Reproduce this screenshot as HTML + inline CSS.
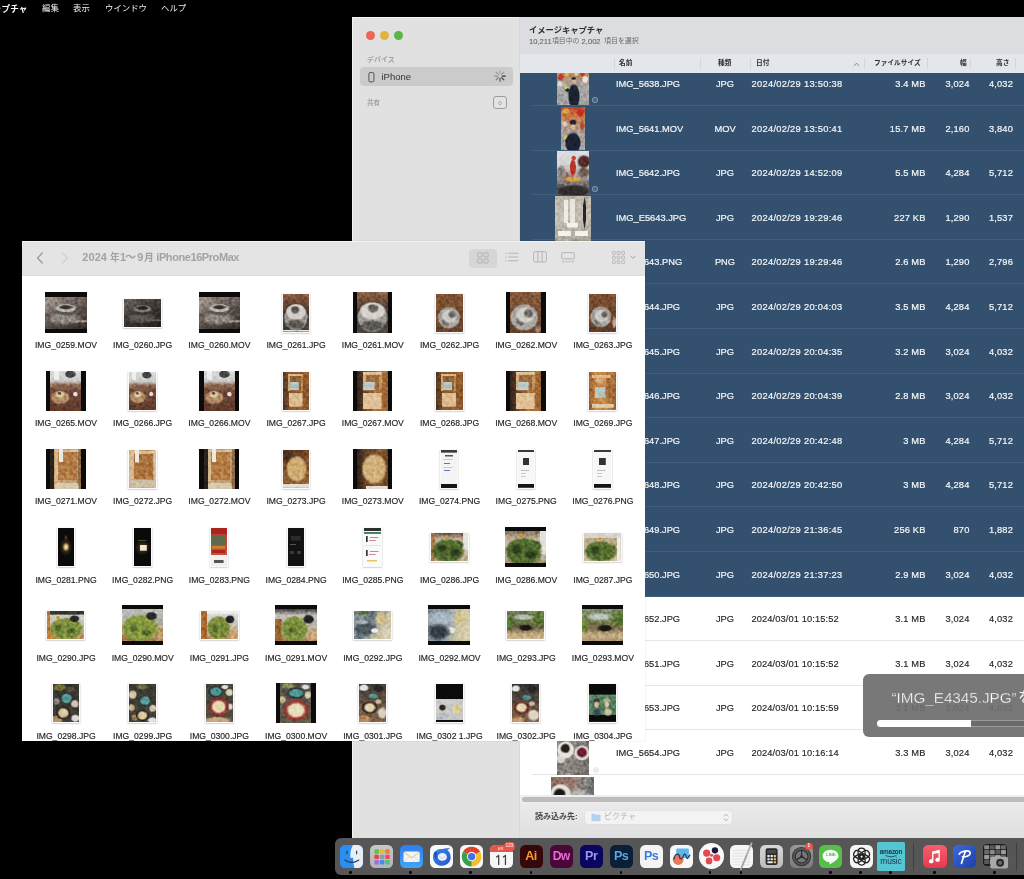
<!DOCTYPE html><html lang="ja"><head><meta charset="utf-8"><title>Image Capture</title><style>
*{box-sizing:border-box;margin:0;padding:0}
html,body{width:1024px;height:879px;overflow:hidden;background:#000}
body{position:relative;font-family:"Liberation Sans",sans-serif;color:#222;-webkit-font-smoothing:antialiased}
.abs,.jp{position:absolute}
svg{display:block;overflow:visible}
.jp text{font-family:"Liberation Sans","Noto Sans CJK JP",sans-serif;white-space:pre}
.t{position:absolute;white-space:nowrap;line-height:1}
/* ---------- Image Capture window ---------- */
#ic{position:absolute;left:352px;top:17px;width:672px;height:821px;background:#fff;overflow:hidden}
#ic .side{position:absolute;left:0;top:0;width:168px;height:821px;background:#e1e1e2;border-right:1px solid #d9d9da;box-shadow:inset 1px 1px 0 rgba(255,255,255,.6)}
#ic .head{position:absolute;left:168px;top:0;width:504px;height:37px;background:#dcdde0}
#ic .cols{position:absolute;left:168px;top:37px;width:504px;height:19px;background:#e3e6ea}
#ic .cols i{position:absolute;top:4px;width:1px;height:11px;background:#d2d5d9}
.tl{position:absolute;width:9px;height:9px;border-radius:50%}
.row{position:absolute;left:168px;width:504px;height:44.6px}
.row.sel{background:#33506e;color:#fff}
.row .ln{position:absolute;left:12px;right:0;bottom:0;height:1px;background:#e6e6e6}
.row.sel .ln{background:#415d7c}
.row .t{top:18.7px;font-size:9.3px;color:#262626;-webkit-text-stroke:.15px currentColor}
.row.sel .t{-webkit-text-stroke:.2px currentColor}
.row .d{letter-spacing:.3px}
.row .n{letter-spacing:.15px}
.row.sel .t{color:#f4f6f8}
.r{text-align:right}
/* ---------- Finder window ---------- */
#fd{position:absolute;left:22px;top:241px;width:623px;height:499.8px;background:#fff;overflow:hidden;box-shadow:0 0 0 .5px rgba(0,0,0,.07)}
#fd .bar{position:absolute;left:0;top:0;width:623px;height:35.4px;background:#e4e4e4;border-bottom:1px solid #dcdcdc;box-shadow:inset 0 1px 0 rgba(255,255,255,.55)}
.lab{position:absolute;width:90px;text-align:center;font-size:8.6px;line-height:1;color:#1f1f1f;white-space:nowrap;-webkit-text-stroke:.15px #1f1f1f}
.th{position:absolute;overflow:hidden}
.nz{position:absolute;left:0;top:0;width:100%;height:100%;filter:url(#nz);mix-blend-mode:overlay;opacity:.3}
/* ---------- Dock ---------- */
#dock{position:absolute;left:335px;top:838px;width:700px;height:37px;background:#565656;border-radius:6px 0 0 6px}
.di{position:absolute;top:7px;width:23px;height:23px;border-radius:5px;overflow:hidden}
.dot{position:absolute;top:33px;width:2.6px;height:2.6px;border-radius:50%;background:#050505}
</style></head><body>
<svg width="0" height="0" style="position:absolute"><filter id="nz" x="0" y="0" width="100%" height="100%" color-interpolation-filters="sRGB"><feTurbulence type="fractalNoise" baseFrequency=".3" numOctaves="2" seed="7"/><feColorMatrix type="matrix" values="1.7 0 0 0 -.35  1.7 0 0 0 -.35  1.7 0 0 0 -.35  0 0 0 0 1"/></filter></svg>
<div id="menubar">
<svg class="jp" style="left:-7.2px;top:3.6px;" width="34.4" height="10.0" viewBox="0 0 34.4 10.0" fill="#fff"><text x="0" y="7.6" font-size="8.6" font-weight="bold" fill="#fff">ャプチャ</text></svg>
<svg class="jp" style="left:41.5px;top:3.6px;" width="16.8" height="9.7" viewBox="0 0 16.8 9.7" fill="#f2f2f2"><text x="0" y="7.4" font-size="8.4" fill="#f2f2f2">編集</text></svg>
<svg class="jp" style="left:73px;top:3.6px;" width="16.8" height="9.7" viewBox="0 0 16.8 9.7" fill="#f2f2f2"><text x="0" y="7.4" font-size="8.4" fill="#f2f2f2">表示</text></svg>
<svg class="jp" style="left:104.5px;top:3.6px;" width="42.0" height="9.7" viewBox="0 0 42.0 9.7" fill="#f2f2f2"><text x="0" y="7.4" font-size="8.4" fill="#f2f2f2">ウインドウ</text></svg>
<svg class="jp" style="left:160.5px;top:3.6px;" width="25.2" height="9.7" viewBox="0 0 25.2 9.7" fill="#f2f2f2"><text x="0" y="7.4" font-size="8.4" fill="#f2f2f2">ヘルプ</text></svg>
</div>
<div id="ic">
<div class="side">
<div class="tl" style="left:14px;top:14px;background:#ec6559"></div>
<div class="tl" style="left:28px;top:14px;background:#e0b43b"></div>
<div class="tl" style="left:42px;top:14px;background:#5bb645"></div>
<svg class="jp" style="left:15px;top:39.4px;" width="28.0" height="8.1" viewBox="0 0 28.0 8.1" fill="#a0a0a0"><text x="0" y="6.2" font-size="7" font-weight="bold" fill="#a0a0a0">デバイス</text></svg>
<div class="abs" style="left:8px;top:50px;width:153px;height:19px;border-radius:4px;background:#cbcbcb"></div>
<svg class="abs" style="left:15.6px;top:54.8px" width="8" height="11" viewBox="0 0 8 11"><rect x=".9" y=".6" width="5" height="9.2" rx="1.1" fill="none" stroke="#4c5560" stroke-width="1"/></svg>
<div class="t" style="left:29.5px;top:55px;font-size:9.5px;color:#333">iPhone</div>
<svg class="abs" style="left:141.8px;top:53.2px" width="12" height="12" viewBox="0 0 12 12"><line x1="6.00" y1="3.70" x2="6.00" y2="0.70" stroke="#333" stroke-opacity="0.22" stroke-width="1.25" stroke-linecap="round"/><line x1="7.63" y1="4.37" x2="9.75" y2="2.25" stroke="#333" stroke-opacity="0.30" stroke-width="1.25" stroke-linecap="round"/><line x1="8.30" y1="6.00" x2="11.30" y2="6.00" stroke="#333" stroke-opacity="0.95" stroke-width="1.25" stroke-linecap="round"/><line x1="7.63" y1="7.63" x2="9.75" y2="9.75" stroke="#333" stroke-opacity="0.85" stroke-width="1.25" stroke-linecap="round"/><line x1="6.00" y1="8.30" x2="6.00" y2="11.30" stroke="#333" stroke-opacity="0.70" stroke-width="1.25" stroke-linecap="round"/><line x1="4.37" y1="7.63" x2="2.25" y2="9.75" stroke="#333" stroke-opacity="0.50" stroke-width="1.25" stroke-linecap="round"/><line x1="3.70" y1="6.00" x2="0.70" y2="6.00" stroke="#333" stroke-opacity="0.38" stroke-width="1.25" stroke-linecap="round"/><line x1="4.37" y1="4.37" x2="2.25" y2="2.25" stroke="#333" stroke-opacity="0.28" stroke-width="1.25" stroke-linecap="round"/></svg>
<svg class="jp" style="left:15px;top:81.7px;" width="13.2" height="7.7" viewBox="0 0 13.2 7.7" fill="#a4a4a4"><text x="0" y="5.8" font-size="6.6" font-weight="bold" fill="#a4a4a4">共有</text></svg>
<div class="abs" style="left:141px;top:79px;width:14px;height:13px;border:1px solid #9c9c9c;border-radius:3px;background:#e3e3e3"></div>
<div class="t" style="left:141px;top:82.5px;width:14px;text-align:center;font-size:6px;color:#8e8e8e">0</div>
</div>
<div class="head">
<svg class="jp" style="left:8.5px;top:8.5px;" width="74.7" height="9.6" viewBox="0 0 74.7 9.6" fill="#2b2b2b"><text x="0" y="7.3" font-size="8.3" font-weight="bold" fill="#2b2b2b">イメージキャプチャ</text></svg>
<div class="t" style="left:9px;top:20.6px;font-size:7.6px;color:#686868;-webkit-text-stroke:.1px #686868">10,211</div>
<svg class="jp" style="left:32.4px;top:19.9px;" width="27.4" height="7.9" viewBox="0 0 27.4 7.9" fill="#6c6c6c"><text x="0" y="6.0" font-size="6.85" fill="#6c6c6c">項目中の</text></svg>
<div class="t" style="left:61.6px;top:20.6px;font-size:7.6px;color:#686868;-webkit-text-stroke:.1px #686868">2,002</div>
<svg class="jp" style="left:83.6px;top:19.9px;" width="34.8" height="8.1" viewBox="0 0 34.8 8.1" fill="#6c6c6c"><text x="0" y="6.1" font-size="6.96" fill="#6c6c6c">項目を選択</text></svg>
</div>
<div class="cols">
<i style="left:94px"></i>
<i style="left:180px"></i>
<i style="left:230px"></i>
<i style="left:343.5px"></i>
<i style="left:406.5px"></i>
<i style="left:450px"></i>
<i style="left:495px"></i>
<svg class="jp" style="left:98.5px;top:5.2px;" width="13.4" height="7.8" viewBox="0 0 13.4 7.8" fill="#2e2e2e"><text x="0" y="5.9" font-size="6.7" font-weight="bold" fill="#2e2e2e">名前</text></svg>
<svg class="jp" style="left:198px;top:5.2px;" width="13.4" height="7.8" viewBox="0 0 13.4 7.8" fill="#2e2e2e"><text x="0" y="5.9" font-size="6.7" font-weight="bold" fill="#2e2e2e">種類</text></svg>
<svg class="jp" style="left:235.5px;top:5.2px;" width="13.4" height="7.8" viewBox="0 0 13.4 7.8" fill="#2e2e2e"><text x="0" y="5.9" font-size="6.7" font-weight="bold" fill="#2e2e2e">日付</text></svg>
<svg class="abs" style="left:333px;top:7.5px" width="7" height="5" viewBox="0 0 7 5"><path d="M1 3.8 3.5 1.2 6 3.8" fill="none" stroke="#777" stroke-width=".9"/></svg>
<svg class="jp" style="left:353.5px;top:5.2px;" width="46.9" height="7.8" viewBox="0 0 46.9 7.8" fill="#2e2e2e"><text x="0" y="5.9" font-size="6.7" font-weight="bold" fill="#2e2e2e">ファイルサイズ</text></svg>
<svg class="jp" style="left:440px;top:5.2px;" width="6.7" height="7.8" viewBox="0 0 6.7 7.8" fill="#2e2e2e"><text x="0" y="5.9" font-size="6.7" font-weight="bold" fill="#2e2e2e">幅</text></svg>
<svg class="jp" style="left:476px;top:5.2px;" width="13.4" height="7.8" viewBox="0 0 13.4 7.8" fill="#2e2e2e"><text x="0" y="5.9" font-size="6.7" font-weight="bold" fill="#2e2e2e">高さ</text></svg>
</div>
<div class="abs" id="list" style="left:0;top:56px;width:672px;height:723px;overflow:hidden">
<div class="row sel" style="top:-11.6px">
<div class="ln"></div>
<div class="t" style="left:96px">IMG_5638.JPG</div>
<div class="t" style="left:180px;width:50px;text-align:center">JPG</div>
<div class="t d" style="left:231.5px">2024/02/29 13:50:38</div>
<div class="t r n" style="left:330px;width:75.5px">3.4 MB</div>
<div class="t r n" style="left:400px;width:49.5px">3,024</div>
<div class="t r n" style="left:443px;width:50px">4,032</div>
</div>
<div class="row sel" style="top:33.0px">
<div class="ln"></div>
<div class="t" style="left:96px">IMG_5641.MOV</div>
<div class="t" style="left:180px;width:50px;text-align:center">MOV</div>
<div class="t d" style="left:231.5px">2024/02/29 13:50:41</div>
<div class="t r n" style="left:330px;width:75.5px">15.7 MB</div>
<div class="t r n" style="left:400px;width:49.5px">2,160</div>
<div class="t r n" style="left:443px;width:50px">3,840</div>
</div>
<div class="row sel" style="top:77.6px">
<div class="ln"></div>
<div class="t" style="left:96px">IMG_5642.JPG</div>
<div class="t" style="left:180px;width:50px;text-align:center">JPG</div>
<div class="t d" style="left:231.5px">2024/02/29 14:52:09</div>
<div class="t r n" style="left:330px;width:75.5px">5.5 MB</div>
<div class="t r n" style="left:400px;width:49.5px">4,284</div>
<div class="t r n" style="left:443px;width:50px">5,712</div>
</div>
<div class="row sel" style="top:122.2px">
<div class="ln"></div>
<div class="t" style="left:96px">IMG_E5643.JPG</div>
<div class="t" style="left:180px;width:50px;text-align:center">JPG</div>
<div class="t d" style="left:231.5px">2024/02/29 19:29:46</div>
<div class="t r n" style="left:330px;width:75.5px">227 KB</div>
<div class="t r n" style="left:400px;width:49.5px">1,290</div>
<div class="t r n" style="left:443px;width:50px">1,537</div>
</div>
<div class="row sel" style="top:166.8px">
<div class="ln"></div>
<div class="t" style="left:96px">IMG_5643.PNG</div>
<div class="t" style="left:180px;width:50px;text-align:center">PNG</div>
<div class="t d" style="left:231.5px">2024/02/29 19:29:46</div>
<div class="t r n" style="left:330px;width:75.5px">2.6 MB</div>
<div class="t r n" style="left:400px;width:49.5px">1,290</div>
<div class="t r n" style="left:443px;width:50px">2,796</div>
</div>
<div class="row sel" style="top:211.4px">
<div class="ln"></div>
<div class="t" style="left:96px">IMG_5644.JPG</div>
<div class="t" style="left:180px;width:50px;text-align:center">JPG</div>
<div class="t d" style="left:231.5px">2024/02/29 20:04:03</div>
<div class="t r n" style="left:330px;width:75.5px">3.5 MB</div>
<div class="t r n" style="left:400px;width:49.5px">4,284</div>
<div class="t r n" style="left:443px;width:50px">5,712</div>
</div>
<div class="row sel" style="top:256.0px">
<div class="ln"></div>
<div class="t" style="left:96px">IMG_5645.JPG</div>
<div class="t" style="left:180px;width:50px;text-align:center">JPG</div>
<div class="t d" style="left:231.5px">2024/02/29 20:04:35</div>
<div class="t r n" style="left:330px;width:75.5px">3.2 MB</div>
<div class="t r n" style="left:400px;width:49.5px">3,024</div>
<div class="t r n" style="left:443px;width:50px">4,032</div>
</div>
<div class="row sel" style="top:300.6px">
<div class="ln"></div>
<div class="t" style="left:96px">IMG_5646.JPG</div>
<div class="t" style="left:180px;width:50px;text-align:center">JPG</div>
<div class="t d" style="left:231.5px">2024/02/29 20:04:39</div>
<div class="t r n" style="left:330px;width:75.5px">2.8 MB</div>
<div class="t r n" style="left:400px;width:49.5px">3,024</div>
<div class="t r n" style="left:443px;width:50px">4,032</div>
</div>
<div class="row sel" style="top:345.2px">
<div class="ln"></div>
<div class="t" style="left:96px">IMG_5647.JPG</div>
<div class="t" style="left:180px;width:50px;text-align:center">JPG</div>
<div class="t d" style="left:231.5px">2024/02/29 20:42:48</div>
<div class="t r n" style="left:330px;width:75.5px">3 MB</div>
<div class="t r n" style="left:400px;width:49.5px">4,284</div>
<div class="t r n" style="left:443px;width:50px">5,712</div>
</div>
<div class="row sel" style="top:389.8px">
<div class="ln"></div>
<div class="t" style="left:96px">IMG_5648.JPG</div>
<div class="t" style="left:180px;width:50px;text-align:center">JPG</div>
<div class="t d" style="left:231.5px">2024/02/29 20:42:50</div>
<div class="t r n" style="left:330px;width:75.5px">3 MB</div>
<div class="t r n" style="left:400px;width:49.5px">4,284</div>
<div class="t r n" style="left:443px;width:50px">5,712</div>
</div>
<div class="row sel" style="top:434.4px">
<div class="ln"></div>
<div class="t" style="left:96px">IMG_5649.JPG</div>
<div class="t" style="left:180px;width:50px;text-align:center">JPG</div>
<div class="t d" style="left:231.5px">2024/02/29 21:36:45</div>
<div class="t r n" style="left:330px;width:75.5px">256 KB</div>
<div class="t r n" style="left:400px;width:49.5px">870</div>
<div class="t r n" style="left:443px;width:50px">1,882</div>
</div>
<div class="row sel" style="top:479.0px">
<div class="ln"></div>
<div class="t" style="left:96px">IMG_5650.JPG</div>
<div class="t" style="left:180px;width:50px;text-align:center">JPG</div>
<div class="t d" style="left:231.5px">2024/02/29 21:37:23</div>
<div class="t r n" style="left:330px;width:75.5px">2.9 MB</div>
<div class="t r n" style="left:400px;width:49.5px">3,024</div>
<div class="t r n" style="left:443px;width:50px">4,032</div>
</div>
<div class="row" style="top:523.6px">
<div class="ln"></div>
<div class="t" style="left:96px">IMG_5652.JPG</div>
<div class="t" style="left:180px;width:50px;text-align:center">JPG</div>
<div class="t d" style="left:231.5px;letter-spacing:.1px">2024/03/01 10:15:52</div>
<div class="t r n" style="left:330px;width:75.5px">3.1 MB</div>
<div class="t r n" style="left:400px;width:49.5px">3,024</div>
<div class="t r n" style="left:443px;width:50px">4,032</div>
</div>
<div class="row" style="top:568.2px">
<div class="ln"></div>
<div class="t" style="left:96px">IMG_5651.JPG</div>
<div class="t" style="left:180px;width:50px;text-align:center">JPG</div>
<div class="t d" style="left:231.5px;letter-spacing:.1px">2024/03/01 10:15:52</div>
<div class="t r n" style="left:330px;width:75.5px">3.1 MB</div>
<div class="t r n" style="left:400px;width:49.5px">3,024</div>
<div class="t r n" style="left:443px;width:50px">4,032</div>
</div>
<div class="row" style="top:612.8px">
<div class="ln"></div>
<div class="t" style="left:96px">IMG_5653.JPG</div>
<div class="t" style="left:180px;width:50px;text-align:center">JPG</div>
<div class="t d" style="left:231.5px;letter-spacing:.1px">2024/03/01 10:15:59</div>
<div class="t r n" style="left:330px;width:75.5px">3.1 MB</div>
<div class="t r n" style="left:400px;width:49.5px">3,024</div>
<div class="t r n" style="left:443px;width:50px">4,032</div>
</div>
<div class="row" style="top:657.4px">
<div class="ln"></div>
<div class="t" style="left:96px">IMG_5654.JPG</div>
<div class="t" style="left:180px;width:50px;text-align:center">JPG</div>
<div class="t d" style="left:231.5px;letter-spacing:.1px">2024/03/01 10:16:14</div>
<div class="t r n" style="left:330px;width:75.5px">3.3 MB</div>
<div class="t r n" style="left:400px;width:49.5px">3,024</div>
<div class="t r n" style="left:443px;width:50px">4,032</div>
</div>
<div class="row" style="top:702.0px">
<div class="ln"></div>
</div>
<div class="th" style="left:204.5px;top:-12.2px;width:32.3px;height:44.4px;background:radial-gradient(8% 6% at 52% 47%,#d8b59c 0,#d8b59c 55%,transparent 100%),radial-gradient(9% 4% at 52% 40%,#2a2426 0,#2a2426 55%,transparent 100%),radial-gradient(19% 30% at 53% 80%,#1c2231 0,#1c2231 80%,transparent 100%),radial-gradient(6% 4.5% at 28% 60%,#d8d23a 0,#d8d23a 55%,transparent 100%),radial-gradient(8% 5% at 33% 66%,#1c2231 0,#1c2231 60%,transparent 100%),radial-gradient(12% 9% at 12% 36%,#c23a2a 0,#c23a2a 55%,transparent 100%),radial-gradient(9% 6% at 30% 31%,#e0c040 0,#e0c040 55%,transparent 100%),radial-gradient(12% 10% at 88% 42%,#e6e2de 0,#e6e2de 55%,transparent 100%),radial-gradient(10% 7% at 80% 30%,#c23a2a 0,#c23a2a 55%,transparent 100%),radial-gradient(8% 6% at 62% 30%,#d8c8a0 0,#d8c8a0 50%,transparent 100%),radial-gradient(10% 8% at 10% 52%,#e0dcd8 0,#e0dcd8 50%,transparent 100%),linear-gradient(#b8473a,#c9a24a 18%,#b48a6e 36%,#aaa29c 52%,#a9a9a9 66%,#9e9e9e)"><div class="nz"></div></div>
<div class="th" style="left:209.0px;top:33.8px;width:23.8px;height:42.9px;background:radial-gradient(13% 8% at 50% 47%,#d8b59c 0,#d8b59c 55%,transparent 100%),radial-gradient(17% 8% at 50% 36%,#2c2628 0,#2c2628 60%,transparent 100%),radial-gradient(34% 26% at 50% 84%,#1c2231 0,#1c2231 82%,transparent 100%),radial-gradient(9% 5% at 20% 70%,#d8d23a 0,#d8d23a 55%,transparent 100%),radial-gradient(12% 6% at 28% 78%,#1c2231 0,#1c2231 60%,transparent 100%),radial-gradient(20% 8% at 20% 10%,#d8a83a 0,#d8a83a 50%,transparent 100%),radial-gradient(18% 10% at 80% 14%,#c2301f 0,#c2301f 60%,transparent 100%),radial-gradient(14% 8% at 15% 40%,#d8d0c8 0,#d8d0c8 50%,transparent 100%),radial-gradient(12% 10% at 88% 44%,#b8482a 0,#b8482a 50%,transparent 100%),linear-gradient(#c2402f,#c9703a 18%,#b98a6a 36%,#a89a94 58%,#a6a6a6)"><div class="nz"></div></div>
<div class="th" style="left:204.5px;top:78.3px;width:32.7px;height:43.7px;background:radial-gradient(11% 22% at 50% 38%,#b8322a 0,#b8322a 70%,transparent 100%),radial-gradient(9% 6% at 52% 16%,#c23a2a 0,#c23a2a 55%,transparent 100%),radial-gradient(22% 16% at 84% 24%,#4f2a26 0,#4f2a26 70%,transparent 100%),radial-gradient(20% 14% at 84% 48%,#6d5a50 0,#6d5a50 55%,transparent 100%),radial-gradient(34% 7% at 50% 64%,#d09a40 0,#d09a40 55%,transparent 100%),radial-gradient(60% 16% at 50% 92%,#2f2c2b 0,#2f2c2b 70%,transparent 100%),radial-gradient(16% 22% at 14% 52%,#8a8480 0,#8a8480 65%,transparent 100%),radial-gradient(10% 14% at 30% 60%,#9a5a48 0,#9a5a48 50%,transparent 100%),linear-gradient(#dedede,#d4d4d4 30%,#9a9694 62%,#5a5856 85%,#8a8886)"><div class="nz"></div></div>
<div class="th" style="left:203.0px;top:123.0px;width:35.8px;height:45.0px;background:linear-gradient(#eeece6,#eeece6) 29.5% 16.7%/12% 52% no-repeat,linear-gradient(#e8e5de,#e8e5de) 50.0% 13.0%/14% 54% no-repeat,radial-gradient(4.5% 38% at 82% 38%,#242426 0,#242426 75%,transparent 100%),linear-gradient(#f4f2ee,#f4f2ee) 12.5% 88.6%/36% 12% no-repeat,linear-gradient(#f4f2ee,#f4f2ee) 87.5% 88.6%/36% 12% no-repeat,linear-gradient(#f4f2ee,#f4f2ee) 48.6% 66.7%/30% 10% no-repeat,linear-gradient(#b9b3a8,#c6c0b4 50%,#aaa59a)"><div class="nz"></div></div>
<div class="th" style="left:205.0px;top:656.8px;width:32.0px;height:45.2px;background:radial-gradient(17% 12% at 26% 41%,#241e1a 0,#241e1a 62%,transparent 100%),radial-gradient(28% 20% at 27% 44%,#e6e4de 0,#e6e4de 84%,transparent 100%),radial-gradient(18% 12% at 12% 64%,#d4d2cc 0,#d4d2cc 62%,transparent 100%),radial-gradient(18% 12.5% at 78% 50%,#6e1c2e 0,#6e1c2e 66%,transparent 100%),radial-gradient(25% 17.5% at 78% 51%,#d8d6d2 0,#d8d6d2 85%,transparent 100%),linear-gradient(100deg,#7e7872,#8c8680 50%,#726d69)"><div class="nz"></div></div>
<div class="th" style="left:199.4px;top:703.5px;width:42.9px;height:18.5px;background:radial-gradient(16% 40% at 20% 98%,#1a181a 0,#1a181a 66%,transparent 100%),radial-gradient(25% 62% at 22% 98%,#e2e0da 0,#e2e0da 86%,transparent 100%),radial-gradient(30% 40% at 62% 100%,#b8b4b0 0,#b8b4b0 50%,transparent 100%),linear-gradient(100deg,#86675a,#98766a 40%,#84817f 75%,#6c6c6e)"><div class="nz"></div></div>
<div class="abs" style="left:239.5px;top:23.5px;width:6px;height:6px;border-radius:50%;border:.8px solid rgba(200,212,226,.45);background:rgba(120,140,165,.3)"></div>
<div class="abs" style="left:239.5px;top:113.0px;width:6px;height:6px;border-radius:50%;border:.8px solid rgba(200,212,226,.45);background:rgba(120,140,165,.3)"></div>
<div class="abs" style="left:241.0px;top:694.0px;width:6px;height:6px;border-radius:50%;background:#ececec"></div>
</div>
<div class="abs" style="left:168px;top:778px;width:504px;height:43px;background:linear-gradient(#efefef,#e9e9e9 30%,#dfdfdf)"></div>
<div class="abs" style="left:170px;top:780px;width:520px;height:5.2px;border-radius:2.6px;background:#bcbcbc"></div>
<svg class="jp" style="left:183px;top:795px;" width="42.6" height="9.3" viewBox="0 0 42.6 9.3" fill="#4a4a4a"><text x="0" y="7.0" font-size="8" font-weight="bold" fill="#4a4a4a">読み込み先:</text></svg>
<div class="abs" style="left:233px;top:793.5px;width:147px;height:13.5px;border-radius:3.5px;background:#f3f3f3;box-shadow:0 0 0 .5px rgba(0,0,0,.03)"></div>
<svg class="abs" style="left:238.5px;top:795.5px" width="10" height="9" viewBox="0 0 10 9"><path d="M.5 1.6Q.5.8 1.3.8H3.6L4.6 1.8H8.7Q9.5 1.8 9.5 2.6V7.4Q9.5 8.2 8.7 8.2H1.3Q.5 8.2.5 7.4Z" fill="#b4d0ec"/></svg>
<svg class="jp" style="left:252px;top:795px;" width="32.0" height="9.3" viewBox="0 0 32.0 9.3" fill="#b4b4b4"><text x="0" y="7.0" font-size="8" fill="#b4b4b4">ピクチャ</text></svg>
<svg class="abs" style="left:370.5px;top:796px" width="6" height="9" viewBox="0 0 6 9"><path d="M1 3.3 3 1.2 5 3.3M1 5.7 3 7.8 5 5.7" fill="none" stroke="#a5a5a5" stroke-width=".9"/></svg>
</div>
<div id="fd">
<div class="bar">
<svg class="abs" style="left:14px;top:11px" width="8" height="12" viewBox="0 0 8 12"><path d="M6.3 1 1.5 6 6.3 11" fill="none" stroke="#9b9b9b" stroke-width="1.3" stroke-linecap="round" stroke-linejoin="round"/></svg>
<svg class="abs" style="left:39px;top:11px" width="8" height="12" viewBox="0 0 8 12"><path d="M1.7 1 6.5 6 1.7 11" fill="none" stroke="#d0d0d0" stroke-width="1.3" stroke-linecap="round" stroke-linejoin="round"/></svg>
<div class="t" style="left:60.3px;top:10.6px;font-size:11px;font-weight:bold;color:#a3a3a3;letter-spacing:.05px">2024</div>
<svg class="jp" style="left:87.6px;top:11px;" width="9.8" height="11.4" viewBox="0 0 9.8 11.4" fill="#a3a3a3"><text x="0" y="8.6" font-size="9.8" font-weight="bold" fill="#a3a3a3">年</text></svg>
<div class="t" style="left:98px;top:10.6px;font-size:11px;font-weight:bold;color:#a3a3a3">1</div>
<svg class="jp" style="left:103.3px;top:9.6px;" width="11.2" height="13.0" viewBox="0 0 11.2 13.0" fill="#a3a3a3"><text x="0" y="9.9" font-size="11.2" font-weight="bold" fill="#a3a3a3">〜</text></svg>
<div class="t" style="left:115.3px;top:10.6px;font-size:11px;font-weight:bold;color:#a3a3a3">9</div>
<svg class="jp" style="left:122px;top:11px;" width="9.8" height="11.4" viewBox="0 0 9.8 11.4" fill="#a3a3a3"><text x="0" y="8.6" font-size="9.8" font-weight="bold" fill="#a3a3a3">月</text></svg>
<div class="t" style="left:134.3px;top:10.6px;font-size:11px;font-weight:bold;color:#a3a3a3;letter-spacing:-.42px">iPhone16ProMax</div>
<div class="abs" style="left:447px;top:7.5px;width:27.5px;height:19px;border-radius:4px;background:#d6d6d6"></div>
<svg class="abs" style="left:455px;top:10.5px" width="12" height="12" viewBox="0 0 12 12" fill="none" stroke="#b3b3b3" stroke-width="1"><rect x=".7" y=".7" width="4.2" height="4.2" rx=".5"/><rect x="6.9" y=".7" width="4.2" height="4.2" rx=".5"/><rect x=".7" y="6.9" width="4.2" height="4.2" rx=".5"/><rect x="6.9" y="6.9" width="4.2" height="4.2" rx=".5"/></svg>
<svg class="abs" style="left:482.5px;top:11px" width="14" height="10" viewBox="0 0 14 10" stroke="#b3b3b3" stroke-width="1.1" stroke-linecap="round"><path d="M.8 1.2h.6M.8 5h.6M.8 8.8h.6M3.8 1.2h9.2M3.8 5h9.2M3.8 8.8h9.2"/></svg>
<div class="abs" style="left:503px;top:9px;width:1px;height:17px;background:#e3e3e3"></div>
<svg class="abs" style="left:511px;top:10.2px" width="14" height="12" viewBox="0 0 14 12" fill="none" stroke="#b3b3b3" stroke-width="1"><rect x=".6" y=".6" width="12.8" height="10.4" rx="1.6"/><path d="M4.9.6v10.4M9.1.6v10.4"/></svg>
<div class="abs" style="left:534px;top:9px;width:1px;height:17px;background:#e3e3e3"></div>
<svg class="abs" style="left:539px;top:10.5px" width="14" height="11" viewBox="0 0 14 11" fill="none" stroke="#b3b3b3" stroke-width="1"><rect x=".7" y=".6" width="12.6" height="6.3" rx="1.2"/><path d="M1 9.6h2M4.4 9.6h2M7.6 9.6h2M11 9.6h2" stroke-width="1.3"/></svg>
<svg class="abs" style="left:589.5px;top:10px" width="13" height="13" viewBox="0 0 13 13" fill="none" stroke="#b3b3b3" stroke-width=".9"><rect x="0.5" y="0.5" width="2.8" height="2.8" rx=".6"/><rect x="0.5" y="5.1" width="2.8" height="2.8" rx=".6"/><rect x="0.5" y="9.7" width="2.8" height="2.8" rx=".6"/><rect x="5.1" y="0.5" width="2.8" height="2.8" rx=".6"/><rect x="5.1" y="5.1" width="2.8" height="2.8" rx=".6"/><rect x="5.1" y="9.7" width="2.8" height="2.8" rx=".6"/><rect x="9.7" y="0.5" width="2.8" height="2.8" rx=".6"/><rect x="9.7" y="5.1" width="2.8" height="2.8" rx=".6"/><rect x="9.7" y="9.7" width="2.8" height="2.8" rx=".6"/></svg>
<svg class="abs" style="left:607.5px;top:14px" width="6" height="5" viewBox="0 0 6 5"><path d="M.8 1 3 3.4 5.2 1" fill="none" stroke="#a5a5a5" stroke-width="1" stroke-linecap="round" stroke-linejoin="round"/></svg>
</div>
<div class="lab" style="left:-1.0px;top:100.0px">IMG_0259.MOV</div>
<div class="lab" style="left:75.7px;top:100.0px">IMG_0260.JPG</div>
<div class="lab" style="left:152.4px;top:100.0px">IMG_0260.MOV</div>
<div class="lab" style="left:229.1px;top:100.0px">IMG_0261.JPG</div>
<div class="lab" style="left:305.8px;top:100.0px">IMG_0261.MOV</div>
<div class="lab" style="left:382.5px;top:100.0px">IMG_0262.JPG</div>
<div class="lab" style="left:459.2px;top:100.0px">IMG_0262.MOV</div>
<div class="lab" style="left:535.9px;top:100.0px">IMG_0263.JPG</div>
<div class="lab" style="left:-1.0px;top:178.2px">IMG_0265.MOV</div>
<div class="lab" style="left:75.7px;top:178.2px">IMG_0266.JPG</div>
<div class="lab" style="left:152.4px;top:178.2px">IMG_0266.MOV</div>
<div class="lab" style="left:229.1px;top:178.2px">IMG_0267.JPG</div>
<div class="lab" style="left:305.8px;top:178.2px">IMG_0267.MOV</div>
<div class="lab" style="left:382.5px;top:178.2px">IMG_0268.JPG</div>
<div class="lab" style="left:459.2px;top:178.2px">IMG_0268.MOV</div>
<div class="lab" style="left:535.9px;top:178.2px">IMG_0269.JPG</div>
<div class="lab" style="left:-1.0px;top:256.4px">IMG_0271.MOV</div>
<div class="lab" style="left:75.7px;top:256.4px">IMG_0272.JPG</div>
<div class="lab" style="left:152.4px;top:256.4px">IMG_0272.MOV</div>
<div class="lab" style="left:229.1px;top:256.4px">IMG_0273.JPG</div>
<div class="lab" style="left:305.8px;top:256.4px">IMG_0273.MOV</div>
<div class="lab" style="left:382.5px;top:256.4px">IMG_0274.PNG</div>
<div class="lab" style="left:459.2px;top:256.4px">IMG_0275.PNG</div>
<div class="lab" style="left:535.9px;top:256.4px">IMG_0276.PNG</div>
<div class="lab" style="left:-1.0px;top:334.6px">IMG_0281.PNG</div>
<div class="lab" style="left:75.7px;top:334.6px">IMG_0282.PNG</div>
<div class="lab" style="left:152.4px;top:334.6px">IMG_0283.PNG</div>
<div class="lab" style="left:229.1px;top:334.6px">IMG_0284.PNG</div>
<div class="lab" style="left:305.8px;top:334.6px">IMG_0285.PNG</div>
<div class="lab" style="left:382.5px;top:334.6px">IMG_0286.JPG</div>
<div class="lab" style="left:459.2px;top:334.6px">IMG_0286.MOV</div>
<div class="lab" style="left:535.9px;top:334.6px">IMG_0287.JPG</div>
<div class="lab" style="left:-1.0px;top:412.8px">IMG_0290.JPG</div>
<div class="lab" style="left:75.7px;top:412.8px">IMG_0290.MOV</div>
<div class="lab" style="left:152.4px;top:412.8px">IMG_0291.JPG</div>
<div class="lab" style="left:229.1px;top:412.8px">IMG_0291.MOV</div>
<div class="lab" style="left:305.8px;top:412.8px">IMG_0292.JPG</div>
<div class="lab" style="left:382.5px;top:412.8px">IMG_0292.MOV</div>
<div class="lab" style="left:459.2px;top:412.8px">IMG_0293.JPG</div>
<div class="lab" style="left:535.9px;top:412.8px">IMG_0293.MOV</div>
<div class="lab" style="left:-1.0px;top:491.0px">IMG_0298.JPG</div>
<div class="lab" style="left:75.7px;top:491.0px">IMG_0299.JPG</div>
<div class="lab" style="left:152.4px;top:491.0px">IMG_0300.JPG</div>
<div class="lab" style="left:229.1px;top:491.0px">IMG_0300.MOV</div>
<div class="lab" style="left:305.8px;top:491.0px">IMG_0301.JPG</div>
<div class="lab" style="left:382.5px;top:491.0px">IMG_0302 1.JPG</div>
<div class="lab" style="left:459.2px;top:491.0px">IMG_0302.JPG</div>
<div class="lab" style="left:535.9px;top:491.0px">IMG_0304.JPG</div>
<div class="th" style="left:23.2px;top:51.4px;width:41.4px;height:40.6px;background:#0b0b0b"><div class="abs" style="left:0;top:4.2px;width:100%;height:32.0px;background:radial-gradient(19% 8% at 50% 32%,#37312d 0,#37312d 58%,transparent 100%),radial-gradient(27% 14% at 50% 35%,#bab5af 0,#bab5af 78%,transparent 100%),radial-gradient(23% 12% at 50% 48%,#5f5953 0,#5f5953 60%,transparent 100%),radial-gradient(44% 20% at 46% 68%,rgba(152,145,138,.88) 0,rgba(152,145,138,.88) 58%,transparent 100%),radial-gradient(30% 10% at 46% 64%,rgba(80,73,68,.7) 0,rgba(80,73,68,.7) 50%,transparent 100%),radial-gradient(30% 5% at 82% 76%,#9a928a 0,#9a928a 45%,transparent 100%),radial-gradient(44% 40% at 12% 15%,rgba(168,158,150,.6) 0,rgba(168,158,150,.6) 10%,transparent 100%),linear-gradient(155deg,#8a7f77,#5f554f 50%,#322b28)"><div class="nz"></div></div></div>
<div class="th" style="left:101.0px;top:56.7px;width:39.2px;height:30.0px;border:1.2px solid #fafafa;box-shadow:0 .5px 1.6px rgba(0,0,0,.32);background:linear-gradient(rgba(10,8,6,.4),rgba(10,8,6,.4)),radial-gradient(19% 8% at 50% 32%,#37312d 0,#37312d 58%,transparent 100%),radial-gradient(27% 14% at 50% 35%,#bab5af 0,#bab5af 78%,transparent 100%),radial-gradient(23% 12% at 50% 48%,#5f5953 0,#5f5953 60%,transparent 100%),radial-gradient(44% 20% at 46% 68%,rgba(152,145,138,.88) 0,rgba(152,145,138,.88) 58%,transparent 100%),radial-gradient(30% 10% at 46% 64%,rgba(80,73,68,.7) 0,rgba(80,73,68,.7) 50%,transparent 100%),radial-gradient(30% 5% at 82% 76%,#9a928a 0,#9a928a 45%,transparent 100%),radial-gradient(44% 40% at 12% 15%,rgba(168,158,150,.6) 0,rgba(168,158,150,.6) 10%,transparent 100%),linear-gradient(155deg,#8a7f77,#5f554f 50%,#322b28)"><div class="nz"></div></div>
<div class="th" style="left:176.5px;top:51.4px;width:41.4px;height:40.6px;background:#0b0b0b"><div class="abs" style="left:0;top:4.2px;width:100%;height:32.0px;background:radial-gradient(19% 8% at 50% 32%,#37312d 0,#37312d 58%,transparent 100%),radial-gradient(27% 14% at 50% 35%,#bab5af 0,#bab5af 78%,transparent 100%),radial-gradient(23% 12% at 50% 48%,#5f5953 0,#5f5953 60%,transparent 100%),radial-gradient(44% 20% at 46% 68%,rgba(152,145,138,.88) 0,rgba(152,145,138,.88) 58%,transparent 100%),radial-gradient(30% 10% at 46% 64%,rgba(80,73,68,.7) 0,rgba(80,73,68,.7) 50%,transparent 100%),radial-gradient(30% 5% at 82% 76%,#9a928a 0,#9a928a 45%,transparent 100%),radial-gradient(44% 40% at 12% 15%,rgba(168,158,150,.6) 0,rgba(168,158,150,.6) 10%,transparent 100%),linear-gradient(155deg,#8a7f77,#5f554f 50%,#322b28)"><div class="nz"></div></div></div>
<div class="th" style="left:259.5px;top:51.7px;width:28.8px;height:40.0px;border:1.2px solid #fafafa;box-shadow:0 .5px 1.6px rgba(0,0,0,.32);background:radial-gradient(19% 12% at 47% 42%,#5f5853 0,#5f5853 62%,transparent 100%),radial-gradient(9% 5% at 40% 37%,#8d8883 0,#8d8883 50%,transparent 100%),radial-gradient(41% 22% at 50% 47%,#d2cfca 0,#d2cfca 82%,transparent 100%),radial-gradient(40% 15% at 50% 80%,#5c5854 0,#5c5854 62%,transparent 100%),radial-gradient(47% 36% at 50% 62%,#9c9892 0,#9c9892 88%,transparent 100%),linear-gradient(#eceae6,#eceae6) 0.0% 100.0%/100% 4% no-repeat,linear-gradient(#8a5e44,#6e4834 20%,#4c3b32 40%,#45413d)"><div class="nz"></div></div>
<div class="th" style="left:330.7px;top:51.4px;width:39.6px;height:40.6px;background:#0b0b0b"><div class="abs" style="left:4.4px;top:0;width:30.8px;height:100%;background:radial-gradient(20% 12% at 52% 40%,#68615c 0,#68615c 62%,transparent 100%),radial-gradient(9% 5% at 45% 35%,#8d8883 0,#8d8883 50%,transparent 100%),radial-gradient(44% 22% at 50% 46%,#d6d3ce 0,#d6d3ce 82%,transparent 100%),radial-gradient(44% 15% at 50% 82%,#5c5854 0,#5c5854 62%,transparent 100%),radial-gradient(50% 37% at 50% 62%,#a09c96 0,#a09c96 88%,transparent 100%),linear-gradient(#8a6248,#72503a 18%,#4f3e34 38%,#494541)"><div class="nz"></div></div></div>
<div class="th" style="left:412.8px;top:51.7px;width:28.8px;height:40.0px;border:1.2px solid #fafafa;box-shadow:0 .5px 1.6px rgba(0,0,0,.32);background:radial-gradient(17% 12% at 60% 54%,#6e6863 0,#6e6863 60%,transparent 100%),radial-gradient(8% 5% at 56% 50%,#a09b96 0,#a09b96 50%,transparent 100%),radial-gradient(30% 20% at 50% 58%,#cfccc7 0,#cfccc7 70%,transparent 100%),radial-gradient(18% 14% at 36% 72%,#77736e 0,#77736e 50%,transparent 100%),radial-gradient(43% 30% at 48% 62%,#a8a59f 0,#a8a59f 86%,transparent 100%),linear-gradient(#7d5334,#744b2e 45%,#67442e)"><div class="nz"></div></div>
<div class="th" style="left:484.0px;top:51.4px;width:39.6px;height:40.6px;background:#0b0b0b"><div class="abs" style="left:4.4px;top:0;width:30.8px;height:100%;background:radial-gradient(18% 13% at 60% 52%,#6e6863 0,#6e6863 60%,transparent 100%),radial-gradient(8% 5% at 56% 48%,#a09b96 0,#a09b96 50%,transparent 100%),radial-gradient(32% 22% at 50% 56%,#d2cfca 0,#d2cfca 70%,transparent 100%),radial-gradient(18% 14% at 34% 72%,#77736e 0,#77736e 50%,transparent 100%),radial-gradient(47% 34% at 46% 62%,#aba8a2 0,#aba8a2 86%,transparent 100%),radial-gradient(12% 12% at 90% 90%,#9a7a6a 0,#9a7a6a 50%,transparent 100%),linear-gradient(#82583c,#774e32 45%,#62412c)"><div class="nz"></div></div></div>
<div class="th" style="left:566.1px;top:51.7px;width:28.8px;height:40.0px;border:1.2px solid #fafafa;box-shadow:0 .5px 1.6px rgba(0,0,0,.32);background:radial-gradient(15% 11% at 58% 54%,#6e6863 0,#6e6863 60%,transparent 100%),radial-gradient(7% 4.5% at 54% 50%,#a09b96 0,#a09b96 50%,transparent 100%),radial-gradient(28% 19% at 46% 58%,#cdcac5 0,#cdcac5 70%,transparent 100%),radial-gradient(16% 13% at 32% 70%,#77736e 0,#77736e 50%,transparent 100%),radial-gradient(41% 29% at 44% 60%,#a6a39d 0,#a6a39d 86%,transparent 100%),radial-gradient(10% 16% at 94% 75%,#c9a890 0,#c9a890 55%,transparent 100%),linear-gradient(#7a4f30,#6e4629 50%,#5d3c28)"><div class="nz"></div></div>
<div class="th" style="left:24.1px;top:129.5px;width:39.6px;height:40.6px;background:#0b0b0b"><div class="abs" style="left:4.4px;top:0;width:30.8px;height:100%;background:radial-gradient(9% 7% at 82% 58%,#e2dfd8 0,#e2dfd8 62%,transparent 100%),radial-gradient(8% 5% at 30% 56%,#5a4a34 0,#5a4a34 40%,transparent 100%),radial-gradient(16% 9% at 33% 59%,#d9cba5 0,#d9cba5 65%,transparent 100%),radial-gradient(31% 18% at 33% 66%,#b08d66 0,#b08d66 80%,transparent 100%),radial-gradient(19% 10% at 66% 8%,#45464a 0,#45464a 78%,transparent 100%),linear-gradient(#efefed,#efefed) 14.3% 0.0%/16% 22% no-repeat,linear-gradient(#d9d9d7,#cacac8 25%,#92705a 34%,#71493a 50%,#5f3a29)"><div class="nz"></div></div></div>
<div class="th" style="left:106.2px;top:129.8px;width:28.8px;height:40.0px;border:1.2px solid #fafafa;box-shadow:0 .5px 1.6px rgba(0,0,0,.32);background:radial-gradient(9% 7% at 82% 58%,#e2dfd8 0,#e2dfd8 62%,transparent 100%),radial-gradient(8% 5% at 30% 56%,#5a4a34 0,#5a4a34 40%,transparent 100%),radial-gradient(16% 9% at 33% 59%,#d9cba5 0,#d9cba5 65%,transparent 100%),radial-gradient(31% 18% at 33% 66%,#b08d66 0,#b08d66 80%,transparent 100%),radial-gradient(19% 10% at 66% 8%,#45464a 0,#45464a 78%,transparent 100%),linear-gradient(#efefed,#efefed) 14.3% 0.0%/16% 22% no-repeat,linear-gradient(#d9d9d7,#cacac8 25%,#92705a 34%,#71493a 50%,#5f3a29)"><div class="nz"></div></div>
<div class="th" style="left:177.4px;top:129.5px;width:39.6px;height:40.6px;background:#0b0b0b"><div class="abs" style="left:4.4px;top:0;width:30.8px;height:100%;background:radial-gradient(9% 7% at 82% 58%,#e2dfd8 0,#e2dfd8 62%,transparent 100%),radial-gradient(8% 5% at 30% 56%,#5a4a34 0,#5a4a34 40%,transparent 100%),radial-gradient(16% 9% at 33% 59%,#d9cba5 0,#d9cba5 65%,transparent 100%),radial-gradient(31% 18% at 33% 66%,#b08d66 0,#b08d66 80%,transparent 100%),radial-gradient(19% 10% at 66% 8%,#45464a 0,#45464a 78%,transparent 100%),linear-gradient(#efefed,#efefed) 14.3% 0.0%/16% 22% no-repeat,linear-gradient(#d9d9d7,#cacac8 25%,#92705a 34%,#71493a 50%,#5f3a29)"><div class="nz"></div></div></div>
<div class="th" style="left:259.5px;top:129.8px;width:28.8px;height:40.0px;border:1.2px solid #fafafa;box-shadow:0 .5px 1.6px rgba(0,0,0,.32);background:linear-gradient(#b3c3c4,#b3c3c4) 42.4% 35.9%/34% 22% no-repeat,linear-gradient(#d9b88c,#d9b88c) 45.5% 6.4%/56% 6% no-repeat,linear-gradient(#cfa873,#cfa873) 21.7% 11.1%/8% 46% no-repeat,linear-gradient(#b98850,#b98850) 73.9% 11.1%/8% 46% no-repeat,linear-gradient(#dcbb90,#dcbb90) 45.8% 87.5%/52% 36% no-repeat,linear-gradient(#cfa97a,#cfa97a) 45.9% 80.0%/26% 20% no-repeat,linear-gradient(#8f5f34,#8f5f34) 45.5% 20.0%/56% 40% no-repeat,linear-gradient(90deg,#4a3324,#7a4c28 20%,#9a6333 60%,#8a5529)"><div class="nz"></div></div>
<div class="th" style="left:330.7px;top:129.5px;width:39.6px;height:40.6px;background:#0b0b0b"><div class="abs" style="left:4.4px;top:0;width:30.8px;height:100%;background:linear-gradient(#bccac9,#bccac9) 36.4% 35.0%/34% 20% no-repeat,linear-gradient(#e2c49a,#e2c49a) 45.0% 4.3%/60% 7% no-repeat,linear-gradient(#d7b17c,#d7b17c) 19.8% 7.4%/9% 46% no-repeat,linear-gradient(#c08f57,#c08f57) 76.9% 7.4%/9% 46% no-repeat,linear-gradient(#e0c097,#e0c097) 45.0% 90.0%/60% 40% no-repeat,linear-gradient(#cfab7d,#cfab7d) 44.4% 80.0%/28% 20% no-repeat,linear-gradient(#a06d3d,#a06d3d) 45.5% 16.7%/56% 40% no-repeat,linear-gradient(90deg,#2c2019,#5d3d26 22%,#b27a42 60%,#96602f)"><div class="nz"></div></div></div>
<div class="th" style="left:412.8px;top:129.8px;width:28.8px;height:40.0px;border:1.2px solid #fafafa;box-shadow:0 .5px 1.6px rgba(0,0,0,.32);background:linear-gradient(#b3c3c4,#b3c3c4) 42.4% 35.9%/34% 22% no-repeat,linear-gradient(#d9b88c,#d9b88c) 45.5% 6.4%/56% 6% no-repeat,linear-gradient(#cfa873,#cfa873) 21.7% 11.1%/8% 46% no-repeat,linear-gradient(#b98850,#b98850) 73.9% 11.1%/8% 46% no-repeat,linear-gradient(#dcbb90,#dcbb90) 45.8% 87.5%/52% 36% no-repeat,linear-gradient(#cfa97a,#cfa97a) 45.9% 80.0%/26% 20% no-repeat,linear-gradient(#8f5f34,#8f5f34) 45.5% 20.0%/56% 40% no-repeat,linear-gradient(90deg,#4a3324,#7a4c28 20%,#9a6333 60%,#8a5529)"><div class="nz"></div></div>
<div class="th" style="left:484.0px;top:129.5px;width:39.6px;height:40.6px;background:#0b0b0b"><div class="abs" style="left:4.4px;top:0;width:30.8px;height:100%;background:linear-gradient(#bccac9,#bccac9) 36.4% 35.0%/34% 20% no-repeat,linear-gradient(#e2c49a,#e2c49a) 45.0% 4.3%/60% 7% no-repeat,linear-gradient(#d7b17c,#d7b17c) 19.8% 7.4%/9% 46% no-repeat,linear-gradient(#c08f57,#c08f57) 76.9% 7.4%/9% 46% no-repeat,linear-gradient(#e0c097,#e0c097) 45.0% 90.0%/60% 40% no-repeat,linear-gradient(#cfab7d,#cfab7d) 44.4% 80.0%/28% 20% no-repeat,linear-gradient(#a06d3d,#a06d3d) 45.5% 16.7%/56% 40% no-repeat,linear-gradient(90deg,#2c2019,#5d3d26 22%,#b27a42 60%,#96602f)"><div class="nz"></div></div></div>
<div class="th" style="left:566.1px;top:129.8px;width:28.8px;height:40.0px;border:1.2px solid #fafafa;box-shadow:0 .5px 1.6px rgba(0,0,0,.32);background:linear-gradient(#b3c6c2,#b3c6c2) 35.5% 57.1%/38% 30% no-repeat,linear-gradient(#deb887,#deb887) 33.3% 8.7%/70% 8% no-repeat,radial-gradient(16% 8% at 38% 22%,#d8b48a 0,#d8b48a 60%,transparent 100%),linear-gradient(#e2cca6,#e2cca6) 50.0% 95.6%/80% 10% no-repeat,linear-gradient(#a06b38,#a06b38) 73.8% 44.4%/16% 64% no-repeat,linear-gradient(90deg,#8f5a2c,#c28446 22%,#c98d50 60%,#9a5f2f)"><div class="nz"></div></div>
<div class="th" style="left:24.1px;top:207.6px;width:39.6px;height:40.6px;background:#0b0b0b"><div class="abs" style="left:4.4px;top:0;width:30.8px;height:100%;background:linear-gradient(#ebe9e3,#ebe9e3) 31.4% 0.0%/14% 33% no-repeat,linear-gradient(#d5c9af,#d5c9af) 58.3% 100.0%/76% 16% no-repeat,linear-gradient(#b27b45,#b27b45) 63.2% 26.7%/62% 70% no-repeat,linear-gradient(#d9bc93,#d9bc93) 58.3% 4.3%/76% 6% no-repeat,linear-gradient(#d6b88e,#d6b88e) 15.6% 18.2%/10% 78% no-repeat,linear-gradient(90deg,#2a211c,#2a211c 12%,#c9a77c 14%,#c29b6a 88%,#8d6a48 92%)"><div class="nz"></div></div></div>
<div class="th" style="left:106.2px;top:207.9px;width:28.8px;height:40.0px;border:1.2px solid #fafafa;box-shadow:0 .5px 1.6px rgba(0,0,0,.32);background:linear-gradient(#ebe9e3,#ebe9e3) 25.9% 0.0%/15% 33% no-repeat,linear-gradient(#cdbfa4,#cdbfa4) 50.0% 100.0%/92% 20% no-repeat,linear-gradient(#a9733f,#a9733f) 60.0% 29.4%/70% 66% no-repeat,linear-gradient(#ddc09a,#ddc09a) 50.0% 4.3%/88% 7% no-repeat,linear-gradient(#d8ba90,#d8ba90) 6.8% 15.4%/12% 74% no-repeat,linear-gradient(90deg,#d2b186,#c59a66 50%,#b98a55 88%,#dcc09a 94%)"><div class="nz"></div></div>
<div class="th" style="left:177.4px;top:207.6px;width:39.6px;height:40.6px;background:#0b0b0b"><div class="abs" style="left:4.4px;top:0;width:30.8px;height:100%;background:linear-gradient(#ebe9e3,#ebe9e3) 31.4% 0.0%/14% 33% no-repeat,linear-gradient(#d5c9af,#d5c9af) 58.3% 100.0%/76% 16% no-repeat,linear-gradient(#b27b45,#b27b45) 63.2% 26.7%/62% 70% no-repeat,linear-gradient(#d9bc93,#d9bc93) 58.3% 4.3%/76% 6% no-repeat,linear-gradient(#d6b88e,#d6b88e) 15.6% 18.2%/10% 78% no-repeat,linear-gradient(90deg,#2a211c,#2a211c 12%,#c9a77c 14%,#c29b6a 88%,#8d6a48 92%)"><div class="nz"></div></div></div>
<div class="th" style="left:259.5px;top:207.9px;width:28.8px;height:40.0px;border:1.2px solid #fafafa;box-shadow:0 .5px 1.6px rgba(0,0,0,.32);background:radial-gradient(42% 36% at 52% 50%,#cfab72 0,#cfab72 80%,transparent 100%),linear-gradient(#e4dfd5,#e4dfd5) 0.0% 100.0%/100% 10% no-repeat,radial-gradient(30% 25% at 15% 15%,#4a2f1c 0,#4a2f1c 50%,transparent 100%),linear-gradient(160deg,#5a3a22,#87582f 60%,#9a6a3c)"><div class="nz"></div></div>
<div class="th" style="left:330.7px;top:207.6px;width:39.6px;height:40.6px;background:#0b0b0b"><div class="abs" style="left:4.4px;top:0;width:30.8px;height:100%;background:radial-gradient(42% 40% at 55% 50%,#d1b07a 0,#d1b07a 80%,transparent 100%),linear-gradient(#e4dfd5,#e4dfd5) 100.0% 100.0%/70% 8% no-repeat,linear-gradient(90deg,#2b1f18,#5d3d24 25%,#87582f 70%,#6b4526)"><div class="nz"></div></div></div>
<div class="th" style="left:417.8px;top:208.1px;width:18.6px;height:39.6px;border:1.2px solid #fafafa;box-shadow:0 .5px 1.6px rgba(0,0,0,.32);background:linear-gradient(#3a3a3c,#3a3a3c) 0.0% 0.0%/100% 7% no-repeat,linear-gradient(#141414,#141414) 0.0% 100.0%/100% 11% no-repeat,linear-gradient(#555,#555) 50.0% 12.5%/50% 4% no-repeat,linear-gradient(#5a76b8,#5a76b8) 30.0% 36.1%/40% 3% no-repeat,linear-gradient(#5a76b8,#5a76b8) 30.0% 53.6%/40% 3% no-repeat,linear-gradient(#bbb,#bbb) 37.5% 25.5%/60% 2% no-repeat,linear-gradient(#bbb,#bbb) 37.5% 44.9%/60% 2% no-repeat,linear-gradient(#f4f4f5,#f4f4f5)"></div>
<div class="th" style="left:494.5px;top:208.1px;width:18.6px;height:39.6px;border:1.2px solid #fafafa;box-shadow:0 .5px 1.6px rgba(0,0,0,.32);background:linear-gradient(#3a3a3c,#3a3a3c) 0.0% 0.0%/100% 6% no-repeat,linear-gradient(#141414,#141414) 0.0% 100.0%/100% 10% no-repeat,linear-gradient(#333,#333) 50.0% 27.2%/40% 19% no-repeat,linear-gradient(#aaa,#aaa) 40.0% 53.1%/50% 2% no-repeat,linear-gradient(#bbb,#bbb) 28.6% 61.2%/30% 2% no-repeat,linear-gradient(#bbb,#bbb) 28.6% 71.4%/30% 2% no-repeat,linear-gradient(#f7f7f7,#f7f7f7)"></div>
<div class="th" style="left:571.2px;top:208.1px;width:18.6px;height:39.6px;border:1.2px solid #fafafa;box-shadow:0 .5px 1.6px rgba(0,0,0,.32);background:linear-gradient(#3a3a3c,#3a3a3c) 0.0% 0.0%/100% 6% no-repeat,linear-gradient(#141414,#141414) 0.0% 100.0%/100% 10% no-repeat,linear-gradient(#333,#333) 50.0% 27.2%/40% 19% no-repeat,linear-gradient(#aaa,#aaa) 40.0% 53.1%/50% 2% no-repeat,linear-gradient(#bbb,#bbb) 28.6% 61.2%/30% 2% no-repeat,linear-gradient(#bbb,#bbb) 28.6% 71.4%/30% 2% no-repeat,linear-gradient(#f7f7f7,#f7f7f7)"></div>
<div class="th" style="left:34.6px;top:286.2px;width:18.6px;height:39.6px;border:1.2px solid #fafafa;box-shadow:0 .5px 1.6px rgba(0,0,0,.32);background:radial-gradient(22% 12% at 50% 50%,#f0d9a0 0,#f0d9a0 30%,transparent 100%),radial-gradient(40% 24% at 50% 50%,rgba(150,100,40,.55) 0,rgba(150,100,40,.55) 20%,transparent 100%),radial-gradient(12% 8% at 50% 25%,rgba(160,120,60,.5) 0,rgba(160,120,60,.5) 20%,transparent 100%),linear-gradient(#0a0a0a,#0a0a0a)"></div>
<div class="th" style="left:111.3px;top:286.2px;width:18.6px;height:39.6px;border:1.2px solid #fafafa;box-shadow:0 .5px 1.6px rgba(0,0,0,.32);background:linear-gradient(#efe6cf,#efe6cf) 55.0% 54.1%/40% 15% no-repeat,radial-gradient(46% 20% at 50% 52%,rgba(150,110,50,.45) 0,rgba(150,110,50,.45) 20%,transparent 100%),linear-gradient(#6b5a36,#6b5a36) 50.0% 32.7%/50% 2% no-repeat,linear-gradient(#0a0a0a,#0a0a0a)"></div>
<div class="th" style="left:187.9px;top:286.2px;width:18.6px;height:39.6px;border:1.2px solid #fafafa;box-shadow:0 .5px 1.6px rgba(0,0,0,.32);background:linear-gradient(#a8241c,#a8241c) 0.0% 0.0%/100% 16% no-repeat,linear-gradient(#5d6b4a,#5d6b4a) 50.0% 24.3%/90% 26% no-repeat,linear-gradient(#c8842a,#c8842a) 50.0% 50.5%/84% 7% no-repeat,linear-gradient(#a8241c,#a8241c) 50.0% 62.0%/84% 8% no-repeat,linear-gradient(#555,#555) 50.0% 91.3%/60% 8% no-repeat,linear-gradient(#b83a2a,#c8503a 70%,#f2f0ee 72%)"></div>
<div class="th" style="left:264.6px;top:286.2px;width:18.6px;height:39.6px;border:1.2px solid #fafafa;box-shadow:0 .5px 1.6px rgba(0,0,0,.32);background:linear-gradient(#2a2a2c,#2a2a2c) 50.0% 22.7%/60% 12% no-repeat,linear-gradient(#3a3a3c,#3a3a3c) 20.8% 65.9%/28% 9% no-repeat,linear-gradient(#3a3a3c,#3a3a3c) 76.4% 65.9%/28% 9% no-repeat,linear-gradient(#555,#555) 25.0% 43.3%/40% 3% no-repeat,linear-gradient(#121213,#121213)"></div>
<div class="th" style="left:340.7px;top:286.2px;width:19.6px;height:39.6px;border:1.2px solid #fafafa;box-shadow:0 .5px 1.6px rgba(0,0,0,.32);background:linear-gradient(#2f2f31,#2f2f31) 0.0% 0.0%/100% 9% no-repeat,linear-gradient(#3d7a5a,#3d7a5a) 0.0% 10.5%/100% 5% no-repeat,linear-gradient(#333,#333) 15.6% 26.2%/10% 16% no-repeat,linear-gradient(#333,#333) 15.6% 69.0%/10% 16% no-repeat,linear-gradient(#999,#999) 64.0% 24.7%/50% 3% no-repeat,linear-gradient(#d88,#d88) 53.3% 33.0%/40% 3% no-repeat,linear-gradient(#999,#999) 64.0% 61.9%/50% 3% no-repeat,linear-gradient(#d88,#d88) 53.3% 70.1%/40% 3% no-repeat,linear-gradient(#ddd,#ddd) 0.0% 46.9%/100% 2% no-repeat,linear-gradient(#e6c46a,#e6c46a) 50.0% 87.5%/60% 4% no-repeat,linear-gradient(#fafafa,#fafafa)"></div>
<div class="th" style="left:407.5px;top:291.0px;width:39.2px;height:30.0px;border:1.2px solid #fafafa;box-shadow:0 .5px 1.6px rgba(0,0,0,.32);background:radial-gradient(6% 7% at 42% 13%,#d9902e 0,#d9902e 50%,transparent 100%),radial-gradient(16% 18% at 30% 55%,#2b3d1c 0,#2b3d1c 45%,transparent 100%),radial-gradient(18% 18% at 66% 70%,#2b3d1c 0,#2b3d1c 45%,transparent 100%),radial-gradient(47% 46% at 46% 64%,#52692f 0,#52692f 78%,transparent 100%),radial-gradient(18% 18% at 72% 42%,#3f5626 0,#3f5626 60%,transparent 100%),linear-gradient(#a27046,#a27046) 0.0% 0.0%/10% 100% no-repeat,linear-gradient(#e6e3da,#e6e3da) 100.0% 0.0%/14% 62% no-repeat,linear-gradient(#5d4c3c,#bfae93 20%,#d2c7b0 55%,#b7a686)"><div class="nz"></div></div>
<div class="th" style="left:483.1px;top:285.7px;width:41.4px;height:40.6px;background:#0b0b0b"><div class="abs" style="left:0;top:4.2px;width:100%;height:32.0px;background:radial-gradient(6% 7% at 40% 13%,#d9902e 0,#d9902e 50%,transparent 100%),radial-gradient(16% 18% at 28% 58%,#2a3b1b 0,#2a3b1b 45%,transparent 100%),radial-gradient(18% 16% at 64% 74%,#2a3b1b 0,#2a3b1b 45%,transparent 100%),radial-gradient(48% 46% at 45% 64%,#506a2e 0,#506a2e 80%,transparent 100%),radial-gradient(17% 18% at 74% 46%,#3d5424 0,#3d5424 60%,transparent 100%),linear-gradient(#e4e1d8,#e4e1d8) 100.0% 0.0%/16% 72% no-repeat,linear-gradient(#7a6a58,#c2b196 24%,#cbc0a9 60%,#a29272)"><div class="nz"></div></div></div>
<div class="th" style="left:560.9px;top:291.0px;width:39.2px;height:30.0px;border:1.2px solid #fafafa;box-shadow:0 .5px 1.6px rgba(0,0,0,.32);background:radial-gradient(6% 8% at 42% 22%,#d9902e 0,#d9902e 50%,transparent 100%),radial-gradient(16% 18% at 30% 62%,#2e401d 0,#2e401d 45%,transparent 100%),radial-gradient(46% 40% at 45% 66%,#58702f 0,#58702f 80%,transparent 100%),radial-gradient(16% 16% at 74% 56%,#3d5424 0,#3d5424 55%,transparent 100%),linear-gradient(#d6d3cc,#d6d3cc) 0.0% 0.0%/100% 18% no-repeat,linear-gradient(#efece4,#efece4) 100.0% 0.0%/10% 100% no-repeat,linear-gradient(#b5a484,#c7b99a)"><div class="nz"></div></div>
<div class="th" style="left:24.3px;top:369.1px;width:39.2px;height:30.0px;border:1.2px solid #fafafa;box-shadow:0 .5px 1.6px rgba(0,0,0,.32);background:radial-gradient(7% 8% at 30% 24%,#d8a02e 0,#d8a02e 50%,transparent 100%),radial-gradient(15% 14% at 74% 28%,#26282a 0,#26282a 68%,transparent 100%),radial-gradient(12% 14% at 30% 62%,#4a5f26 0,#4a5f26 45%,transparent 100%),radial-gradient(14% 12% at 66% 72%,#4a5f26 0,#4a5f26 45%,transparent 100%),radial-gradient(47% 42% at 52% 64%,#7d8f3c 0,#7d8f3c 84%,transparent 100%),radial-gradient(22% 14% at 50% 40%,#8a9a44 0,#8a9a44 60%,transparent 100%),linear-gradient(#b8763a,#b8763a) 0.0% 0.0%/9% 100% no-repeat,radial-gradient(12% 12% at 8% 90%,#d98a2c 0,#d98a2c 55%,transparent 100%),linear-gradient(#34342f,#34342f) 0.0% 0.0%/100% 13% no-repeat,linear-gradient(#cfd0cc,#c9c6ba 40%,#b98a58)"><div class="nz"></div></div>
<div class="th" style="left:99.9px;top:363.8px;width:41.4px;height:40.6px;background:#0b0b0b"><div class="abs" style="left:0;top:4.2px;width:100%;height:32.0px;background:radial-gradient(16% 14% at 72% 22%,#26282a 0,#26282a 68%,transparent 100%),radial-gradient(12% 14% at 28% 60%,#50652a 0,#50652a 45%,transparent 100%),radial-gradient(14% 12% at 60% 74%,#50652a 0,#50652a 45%,transparent 100%),radial-gradient(46% 44% at 44% 60%,#84983e 0,#84983e 84%,transparent 100%),radial-gradient(22% 14% at 40% 34%,#94a44c 0,#94a44c 60%,transparent 100%),linear-gradient(#b89464,#b89464) 100.0% 100.0%/20% 42% no-repeat,linear-gradient(#a27444,#a27444) 0.0% 100.0%/34% 18% no-repeat,linear-gradient(#bcbcb8,#b4b1a8 35%,#a8834f)"><div class="nz"></div></div></div>
<div class="th" style="left:177.6px;top:369.1px;width:39.2px;height:30.0px;border:1.2px solid #fafafa;box-shadow:0 .5px 1.6px rgba(0,0,0,.32);background:radial-gradient(14% 16% at 78% 30%,#202226 0,#202226 68%,transparent 100%),radial-gradient(10% 14% at 38% 64%,#4a5f26 0,#4a5f26 45%,transparent 100%),radial-gradient(33% 44% at 48% 60%,#7a8c3c 0,#7a8c3c 84%,transparent 100%),radial-gradient(18% 14% at 46% 36%,#8c9c48 0,#8c9c48 60%,transparent 100%),linear-gradient(#a9692f,#a9692f) 0.0% 0.0%/17% 100% no-repeat,linear-gradient(#c9a274,#c9a274) 100.0% 100.0%/22% 32% no-repeat,linear-gradient(#eeeeec,#eeeeec) 0.0% 0.0%/100% 10% no-repeat,linear-gradient(#dcdcda,#cfccc2 40%,#b08c5a)"><div class="nz"></div></div>
<div class="th" style="left:253.2px;top:363.8px;width:41.4px;height:40.6px;background:#0b0b0b"><div class="abs" style="left:0;top:4.2px;width:100%;height:32.0px;background:radial-gradient(14% 16% at 80% 32%,#202226 0,#202226 68%,transparent 100%),radial-gradient(10% 14% at 40% 66%,#50652a 0,#50652a 45%,transparent 100%),radial-gradient(33% 42% at 46% 62%,#7d8f3e 0,#7d8f3e 84%,transparent 100%),radial-gradient(18% 14% at 44% 38%,#8e9e4a 0,#8e9e4a 60%,transparent 100%),linear-gradient(#96642f,#96642f) 0.0% 100.0%/16% 70% no-repeat,linear-gradient(#c9a274,#c9a274) 100.0% 100.0%/24% 30% no-repeat,linear-gradient(#3a3a3c,#c4c1b8 20%,#bdb9ac 45%,#a88a5a)"><div class="nz"></div></div></div>
<div class="th" style="left:330.9px;top:369.1px;width:39.2px;height:30.0px;border:1.2px solid #fafafa;box-shadow:0 .5px 1.6px rgba(0,0,0,.32);background:radial-gradient(16% 24% at 72% 26%,#d0bd86 0,#d0bd86 68%,transparent 100%),radial-gradient(12% 10% at 56% 70%,#ecece9 0,#ecece9 60%,transparent 100%),radial-gradient(20% 10% at 22% 40%,#a9b4ba 0,#a9b4ba 45%,transparent 100%),radial-gradient(34% 30% at 30% 62%,#4d585f 0,#4d585f 62%,transparent 100%),radial-gradient(18% 10% at 25% 6%,#4d6a38 0,#4d6a38 55%,transparent 100%),radial-gradient(14% 22% at 88% 80%,#d8d2bc 0,#d8d2bc 55%,transparent 100%),linear-gradient(120deg,#6a777e,#8b979d 22%,#5f6b72 38%,#8a959b 50%,#c9c09f 70%,#d6cdac)"><div class="nz"></div></div>
<div class="th" style="left:406.4px;top:363.8px;width:41.4px;height:40.6px;background:#0b0b0b"><div class="abs" style="left:0;top:4.2px;width:100%;height:32.0px;background:radial-gradient(15% 26% at 76% 28%,#d2c290 0,#d2c290 65%,transparent 100%),radial-gradient(30% 28% at 26% 72%,#353d44 0,#353d44 60%,transparent 100%),radial-gradient(36% 26% at 30% 30%,#a9b6c2 0,#a9b6c2 60%,transparent 100%),radial-gradient(14% 12% at 54% 66%,#e6e6e4 0,#e6e6e4 55%,transparent 100%),linear-gradient(100deg,#73808a,#94a0aa 45%,#cfc6a3 72%,#d8cfae)"><div class="nz"></div></div></div>
<div class="th" style="left:484.2px;top:369.1px;width:39.2px;height:30.0px;border:1.2px solid #fafafa;box-shadow:0 .5px 1.6px rgba(0,0,0,.32);background:radial-gradient(21% 13% at 50% 60%,#1a1613 0,#1a1613 60%,transparent 100%),radial-gradient(32% 12% at 45% 22%,#b4bcb6 0,#b4bcb6 55%,transparent 100%),radial-gradient(16% 32% at 86% 30%,#557430 0,#557430 60%,transparent 100%),radial-gradient(12% 26% at 8% 45%,#557430 0,#557430 60%,transparent 100%),linear-gradient(#6f7c50,#647342 35%,#6d5e44 60%,#c0a980 82%,#cbb58e)"><div class="nz"></div></div>
<div class="th" style="left:559.8px;top:363.8px;width:41.4px;height:40.6px;background:#0b0b0b"><div class="abs" style="left:0;top:4.2px;width:100%;height:32.0px;background:radial-gradient(21% 12% at 56% 60%,#1a1613 0,#1a1613 60%,transparent 100%),radial-gradient(34% 13% at 42% 24%,#bcc3bf 0,#bcc3bf 55%,transparent 100%),radial-gradient(14% 32% at 90% 30%,#557430 0,#557430 60%,transparent 100%),radial-gradient(12% 24% at 6% 52%,#688636 0,#688636 60%,transparent 100%),linear-gradient(#808b70,#74834f 35%,#74644a 58%,#c0a980 80%,#b39c76)"><div class="nz"></div></div></div>
<div class="th" style="left:29.5px;top:442.2px;width:28.8px;height:40.0px;border:1.2px solid #fafafa;box-shadow:0 .5px 1.6px rgba(0,0,0,.32);background:radial-gradient(22% 14% at 52% 38%,#559a96 0,#559a96 70%,transparent 100%),radial-gradient(27% 17% at 52% 38%,#2c3a3a 0,#2c3a3a 80%,transparent 100%),radial-gradient(24% 15% at 40% 76%,#dccb9f 0,#dccb9f 62%,transparent 100%),radial-gradient(31% 19% at 40% 76%,#2a2420 0,#2a2420 82%,transparent 100%),radial-gradient(17% 12% at 84% 52%,#d2c6b1 0,#d2c6b1 62%,transparent 100%),radial-gradient(30% 11% at 25% 9%,#6f6c30 0,#6f6c30 58%,transparent 100%),radial-gradient(19% 11% at 86% 90%,#dcdcd6 0,#dcdcd6 62%,transparent 100%),radial-gradient(28% 12% at 12% 94%,#b89468 0,#b89468 62%,transparent 100%),radial-gradient(14% 11% at 14% 46%,#8f8f88 0,#8f8f88 55%,transparent 100%),radial-gradient(20% 9% at 70% 14%,#55523a 0,#55523a 50%,transparent 100%),linear-gradient(#34322b,#403d35)"><div class="nz"></div></div>
<div class="th" style="left:106.2px;top:442.2px;width:28.8px;height:40.0px;border:1.2px solid #fafafa;box-shadow:0 .5px 1.6px rgba(0,0,0,.32);background:radial-gradient(21% 13% at 60% 44%,#559a96 0,#559a96 70%,transparent 100%),radial-gradient(26% 16% at 60% 44%,#2c3a3a 0,#2c3a3a 80%,transparent 100%),radial-gradient(21% 13% at 50% 83%,#dfcc9f 0,#dfcc9f 62%,transparent 100%),radial-gradient(27% 16% at 50% 83%,#2a2420 0,#2a2420 82%,transparent 100%),radial-gradient(16% 11% at 88% 64%,#d2c6b1 0,#d2c6b1 62%,transparent 100%),radial-gradient(17% 13% at 14% 28%,#d6c9a7 0,#d6c9a7 62%,transparent 100%),radial-gradient(26% 9% at 50% 7%,#706d42 0,#706d42 58%,transparent 100%),radial-gradient(20% 8% at 86% 95%,#e0e0de 0,#e0e0de 62%,transparent 100%),radial-gradient(14% 11% at 10% 62%,#c9b58a 0,#c9b58a 55%,transparent 100%),radial-gradient(16% 10% at 22% 88%,#a8865a 0,#a8865a 50%,transparent 100%),linear-gradient(#39362f,#454139)"><div class="nz"></div></div>
<div class="th" style="left:182.8px;top:442.2px;width:28.8px;height:40.0px;border:1.2px solid #fafafa;box-shadow:0 .5px 1.6px rgba(0,0,0,.32);background:radial-gradient(29% 19% at 47% 60%,#e6d8b4 0,#e6d8b4 68%,transparent 100%),radial-gradient(39% 26% at 47% 60%,#94352c 0,#94352c 84%,transparent 100%),radial-gradient(25% 13% at 36% 20%,#4f9390 0,#4f9390 68%,transparent 100%),radial-gradient(30% 16% at 36% 20%,#26302f 0,#26302f 78%,transparent 100%),radial-gradient(16% 11% at 86% 22%,#d8ccb2 0,#d8ccb2 62%,transparent 100%),radial-gradient(60% 11% at 40% 96%,#c9a67c 0,#c9a67c 65%,transparent 100%),radial-gradient(11% 11% at 90% 60%,#d6d0c0 0,#d6d0c0 55%,transparent 100%),radial-gradient(16% 7% at 70% 8%,#e4e2dc 0,#e4e2dc 55%,transparent 100%),linear-gradient(#433f38,#544b40)"><div class="nz"></div></div>
<div class="th" style="left:254.1px;top:441.9px;width:39.6px;height:40.6px;background:#0b0b0b"><div class="abs" style="left:4.4px;top:0;width:30.8px;height:100%;background:radial-gradient(33% 21% at 52% 68%,#e8dcba 0,#e8dcba 70%,transparent 100%),radial-gradient(43% 28% at 52% 68%,#94352c 0,#94352c 86%,transparent 100%),radial-gradient(27% 12% at 52% 25%,#4f9390 0,#4f9390 68%,transparent 100%),radial-gradient(32% 15% at 52% 25%,#26302f 0,#26302f 78%,transparent 100%),radial-gradient(13% 11% at 90% 30%,#d8ccb2 0,#d8ccb2 62%,transparent 100%),radial-gradient(26% 8% at 26% 7%,#8a8a58 0,#8a8a58 58%,transparent 100%),radial-gradient(13% 11% at 8% 42%,#c9b58a 0,#c9b58a 55%,transparent 100%),radial-gradient(16% 7% at 82% 10%,#e0ded8 0,#e0ded8 55%,transparent 100%),linear-gradient(#524e47,#635a4c)"><div class="nz"></div></div></div>
<div class="th" style="left:336.1px;top:442.2px;width:28.8px;height:40.0px;border:1.2px solid #fafafa;box-shadow:0 .5px 1.6px rgba(0,0,0,.32);background:radial-gradient(24% 14% at 40% 62%,#e6d7b2 0,#e6d7b2 62%,transparent 100%),radial-gradient(32% 18% at 40% 62%,#38281f 0,#38281f 82%,transparent 100%),radial-gradient(18% 8% at 52% 32%,#4f9390 0,#4f9390 62%,transparent 100%),radial-gradient(19% 17% at 86% 76%,#dacfbd 0,#dacfbd 62%,transparent 100%),radial-gradient(20% 10% at 18% 10%,#e4e4e2 0,#e4e4e2 62%,transparent 100%),radial-gradient(28% 12% at 18% 93%,#b88a58 0,#b88a58 62%,transparent 100%),radial-gradient(24% 11% at 72% 12%,#2a2826 0,#2a2826 58%,transparent 100%),radial-gradient(14% 8% at 72% 46%,#c9b99a 0,#c9b99a 50%,transparent 100%),linear-gradient(#3c3935,#645344 50%,#82634a)"><div class="nz"></div></div>
<div class="th" style="left:412.8px;top:442.2px;width:28.8px;height:40.0px;border:1.2px solid #fafafa;box-shadow:0 .5px 1.6px rgba(0,0,0,.32);background:radial-gradient(14% 9% at 24% 62%,#2b2622 0,#2b2622 65%,transparent 100%),radial-gradient(10% 7% at 24% 70%,#dcc0a6 0,#dcc0a6 55%,transparent 100%),radial-gradient(19% 15% at 78% 66%,#dccb8c 0,#dccb8c 62%,transparent 100%),radial-gradient(20% 12% at 25% 84%,#b8bcc4 0,#b8bcc4 60%,transparent 100%),linear-gradient(#0a0a0a,#0a0a0a) 0.0% 0.0%/100% 40% no-repeat,linear-gradient(#0c0c0c,#0c0c0c) 0.0% 100.0%/100% 7% no-repeat,linear-gradient(#d0d0ce,#c4c4c2)"><div class="nz"></div></div>
<div class="th" style="left:489.4px;top:442.2px;width:28.8px;height:40.0px;border:1.2px solid #fafafa;box-shadow:0 .5px 1.6px rgba(0,0,0,.32);background:radial-gradient(24% 14% at 35% 62%,#e6d7b2 0,#e6d7b2 62%,transparent 100%),radial-gradient(32% 18% at 35% 63%,#6e2a22 0,#6e2a22 82%,transparent 100%),radial-gradient(18% 8% at 54% 36%,#4f9390 0,#4f9390 62%,transparent 100%),radial-gradient(25% 17% at 80% 82%,#dfd5c4 0,#dfd5c4 62%,transparent 100%),radial-gradient(18% 10% at 14% 12%,#e4e4e2 0,#e4e4e2 62%,transparent 100%),radial-gradient(28% 10% at 20% 95%,#c89a68 0,#c89a68 62%,transparent 100%),radial-gradient(24% 13% at 76% 14%,#2a2826 0,#2a2826 58%,transparent 100%),radial-gradient(14% 8% at 74% 52%,#c9b99a 0,#c9b99a 50%,transparent 100%),linear-gradient(#33312e,#564a40 50%,#82634a)"><div class="nz"></div></div>
<div class="th" style="left:566.1px;top:442.2px;width:28.8px;height:40.0px;border:1.2px solid #fafafa;box-shadow:0 .5px 1.6px rgba(0,0,0,.32);background:radial-gradient(11% 9% at 28% 54%,#d9b99a 0,#d9b99a 55%,transparent 100%),radial-gradient(11% 9% at 66% 54%,#dcc0a2 0,#dcc0a2 55%,transparent 100%),radial-gradient(17% 7% at 66% 43%,#b9b08a 0,#b9b08a 55%,transparent 100%),radial-gradient(15% 7% at 28% 44%,#3a3a32 0,#3a3a32 55%,transparent 100%),radial-gradient(18% 12% at 30% 74%,#3a4a5a 0,#3a4a5a 55%,transparent 100%),radial-gradient(18% 12% at 70% 74%,#c8b89a 0,#c8b89a 55%,transparent 100%),linear-gradient(#0a0a0a,#0a0a0a) 0.0% 0.0%/100% 28% no-repeat,linear-gradient(#0a0a0a,#0a0a0a) 0.0% 100.0%/100% 18% no-repeat,linear-gradient(#5d8a6a,#4f7a52)"><div class="nz"></div></div>
</div>
<div class="abs" style="left:863px;top:674px;width:180px;height:62.5px;border-radius:6px;background:rgba(110,110,110,.93)"></div>
<div class="t" style="left:891.5px;top:689.6px;font-size:15.3px;color:#fff;letter-spacing:-.05px;-webkit-text-stroke:.32px #777">“IMG_E4345.JPG”</div>
<svg class="jp" style="left:1017.5px;top:688.5px;" width="15.0" height="17.4" viewBox="0 0 15.0 17.4" fill="#f4f4f4"><text x="0" y="13.2" font-size="15" fill="#f4f4f4">を</text></svg>
<div class="abs" style="left:877px;top:719.5px;width:160px;height:7px;border-radius:3.5px;background:#6b6b6b;box-shadow:inset 0 0 0 1px #9a9a9a"></div>
<div class="abs" style="left:877px;top:719.5px;width:94px;height:7px;border-radius:3.5px 0 0 3.5px;background:#fff"></div>
<div id="dock">
<div class="di" style="left:4.8px;top:6.7px;width:23.2px;height:23.2px;border-radius:5.2px;background:#2c8ff0"><svg width="23.2" height="23.2" viewBox="0 0 24 24"><rect width="24" height="24" fill="#2c8ff0"/><path d="M13.4 0C11.2 4 10.4 8.6 10.6 13.2H13.6C13.5 17 14 20.6 15 24H24V0Z" fill="#e9eef4"/><path d="M5 15.5Q12 20.5 19.5 15.5" fill="none" stroke="#1d3d63" stroke-width="1.1" stroke-linecap="round"/><path d="M7.2 6.4v2.6M17.2 6.4v2.6" stroke="#1d3d63" stroke-width="1.2" stroke-linecap="round"/></svg></div>
<div class="di" style="left:34.7px;top:6.7px;width:23.2px;height:23.2px;border-radius:5.2px;background:linear-gradient(#c9c7c8,#b3b3b8)"><svg width="23.2" height="23.2" viewBox="0 0 24 24"><rect x="4.6" y="4.4" width="4.6" height="4.6" rx="1.1" fill="#5bc24a"/><rect x="10.2" y="4.4" width="4.6" height="4.6" rx="1.1" fill="#f0b83a"/><rect x="15.8" y="4.4" width="4.6" height="4.6" rx="1.1" fill="#ef7d3a"/><rect x="4.6" y="10" width="4.6" height="4.6" rx="1.1" fill="#e8453c"/><rect x="10.2" y="10" width="4.6" height="4.6" rx="1.1" fill="#8f98a8"/><rect x="15.8" y="10" width="4.6" height="4.6" rx="1.1" fill="#ee4a5a"/><rect x="4.6" y="15.6" width="4.6" height="4.6" rx="1.1" fill="#a56be0"/><rect x="10.2" y="15.6" width="4.6" height="4.6" rx="1.1" fill="#3f8ff0"/><rect x="15.8" y="15.6" width="4.6" height="4.6" rx="1.1" fill="#49c66e"/></svg></div>
<div class="di" style="left:64.9px;top:6.7px;width:23.2px;height:23.2px;border-radius:5.2px;background:linear-gradient(#2f7cf0,#3fa6f4)"><svg width="23.2" height="23.2" viewBox="0 0 24 24"><rect x="3.6" y="6.6" width="16.8" height="11" rx="1.6" fill="#f4f4ee"/><path d="M4 7.4 12 13.4 20 7.4" fill="none" stroke="#d6c9a4" stroke-width="1.1"/><path d="M4.2 17 9.6 11.8M19.8 17 14.4 11.8" stroke="#e0d6b8" stroke-width=".8"/></svg></div>
<div class="di" style="left:94.8px;top:6.7px;width:23.2px;height:23.2px;border-radius:5.2px;background:#f8f8f8"><svg width="23.2" height="23.2" viewBox="0 0 24 24"><defs><linearGradient id="tb" x1="0" y1="0" x2="1" y2="1"><stop offset="0" stop-color="#3f86f2"/><stop offset="1" stop-color="#2456c8"/></linearGradient></defs><path d="M4.600 7.200C3 9.500 2.600 12.600 3.600 15.400 5 19.200 8.400 21.400 12.400 21.400 17.600 21.400 21.400 17.400 21.400 12.600 21.400 9.400 20 6.800 17.800 5.200L21 3.600C18 3 15.200 3.200 13 4.200 9.600 3.600 7.400 4.600 6 6.200Z" fill="url(#tb)"/><path d="M4.600 7.200C6.200 6.600 7.200 7.400 7.600 8.800 6.200 10.600 6.200 13.600 7.400 15.600 5.200 14.200 3.800 10.400 4.600 7.200Z" fill="#1f4db4"/><ellipse cx="12.800" cy="12.400" rx="4.700" ry="4" fill="#eef3f8"/><path d="M9.600 11.600 12.800 14.200 16 11.600" fill="none" stroke="#a9c0dc" stroke-width=".9"/></svg></div>
<div class="di" style="left:124.7px;top:6.7px;width:23.2px;height:23.2px;border-radius:5.2px;background:#f5f5f3"><svg width="23.2" height="23.2" viewBox="0 0 24 24"><path d="M12 12 L3.17 6.90 A10.2 10.2 0 0 1 20.83 6.90 Z" fill="#e0412f"/><path d="M12 12 L20.83 6.90 A10.2 10.2 0 0 1 12.00 22.20 Z" fill="#f3bf2d"/><path d="M12 12 L12.00 22.20 A10.2 10.2 0 0 1 3.17 6.90 Z" fill="#3a9f4b"/><circle cx="12" cy="12" r="4.900" fill="#f2f2f2"/><circle cx="12" cy="12" r="3.800" fill="#3f74e6"/></svg></div>
<div class="di" style="left:154.7px;top:6.7px;width:23.2px;height:23.2px;border-radius:5.2px;background:#f6f6f6"><div class="abs" style="left:0;top:0;width:100%;height:7.2px;background:#e5564a"></div><svg class="abs" style="left:0;top:0" width="23.2" height="23.2" viewBox="0 0 24 24"><path d="M6.400 12.600 9 10.800V20.600M13.400 12.600 16 10.800V20.600" fill="none" stroke="#3c3c3e" stroke-width="1.250" stroke-linejoin="round"/></svg></div>
<div class="abs" style="left:169.0px;top:4.2px;width:11px;height:8.6px;border-radius:4.3px;background:#e8554b"></div>
<div class="t" style="left:169.0px;top:6.200px;width:11px;text-align:center;font-size:4.800px;color:#f6d8d4;font-weight:bold">123</div>
<div class="t" style="left:162.5px;top:8.800px;font-size:4px;color:#f4c8c2;font-weight:bold">AR</div>
<div class="di" style="left:184.5px;top:6.7px;width:23.2px;height:23.2px;border-radius:5.2px;background:#37080a"><div class="t" style="left:0;width:100%;text-align:center;top:5.2px;font-size:12.5px;font-weight:bold;color:#f79a2c;letter-spacing:-0.4px">Ai</div></div>
<div class="di" style="left:214.6px;top:6.7px;width:23.2px;height:23.2px;border-radius:5.2px;background:#4a0838"><div class="t" style="left:0;width:100%;text-align:center;top:5.3px;font-size:12.2px;font-weight:bold;color:#e86ad8;letter-spacing:-0.7px">Dw</div></div>
<div class="di" style="left:244.6px;top:6.7px;width:23.2px;height:23.2px;border-radius:5.2px;background:#080660"><div class="t" style="left:0;width:100%;text-align:center;top:5.2px;font-size:12.5px;font-weight:bold;color:#9a9af4;letter-spacing:-0.4px">Pr</div></div>
<div class="di" style="left:274.6px;top:6.7px;width:23.2px;height:23.2px;border-radius:5.2px;background:#0a2038"><div class="t" style="left:0;width:100%;text-align:center;top:5.2px;font-size:12.5px;font-weight:bold;color:#5aa8e0;letter-spacing:-0.4px">Ps</div></div>
<div class="di" style="left:304.6px;top:6.7px;width:23.2px;height:23.2px;border-radius:5.2px;background:#f3f3f5"><div class="t" style="left:0;width:100%;text-align:center;top:5.2px;font-size:12.5px;font-weight:bold;color:#3a7be0;letter-spacing:-0.4px">Ps</div></div>
<div class="di" style="left:334.6px;top:6.7px;width:23.2px;height:23.2px;border-radius:5.2px;background:#f7f7f7"><svg width="23.2" height="23.2" viewBox="0 0 24 24"><rect x="6.5" y="3.5" width="13" height="10" rx="1" fill="#5ab8ee"/><circle cx="8.5" cy="15" r="5.6" fill="#e8785a"/><path d="M4 14.5C6 7 9.5 9 10 12.5S13 14 14 11 16.5 9.5 17 12.5 19.500 12.500 20.500 10.500" fill="none" stroke="#1f3f6a" stroke-width="1.3" stroke-linecap="round"/></svg></div>
<div class="di" style="left:363.6px;top:5.4px;width:25.6px;height:25.6px;border-radius:12.8px;background:#f8f8f8"><svg width="25.600" height="25.600" viewBox="0 0 26 26"><circle cx="7.8" cy="10.200" r="3.7" fill="#e24a52"/><circle cx="16.200" cy="7.4" r="3.2" fill="#141a3c"/><circle cx="18" cy="15" r="3.6" fill="#e24a52"/><circle cx="10.200" cy="18.200" r="3.400" fill="#e24a52"/><circle cx="12.800" cy="12.400" r="1.600" fill="#e24a52"/></svg></div>
<div class="di" style="left:394.8px;top:6.7px;width:23.2px;height:23.2px;border-radius:5.2px;background:#f6f6f4"><svg width="23.2" height="23.2" viewBox="0 0 24 24"><path d="M2.5 5.5H21" stroke="#d4d4d4" stroke-width=".6"/><path d="M2.5 8.5H21" stroke="#d4d4d4" stroke-width=".6"/><path d="M2.5 11.5H21" stroke="#d4d4d4" stroke-width=".6"/><path d="M2.5 14.5H21" stroke="#d4d4d4" stroke-width=".6"/><path d="M2.5 17.5H21" stroke="#d4d4d4" stroke-width=".6"/><path d="M2.5 20.5H21" stroke="#d4d4d4" stroke-width=".6"/></svg></div>
<svg class="abs" style="left:404.0px;top:1px" width="14" height="30" viewBox="0 0 14 30"><path d="M12.600 4.200 1.800 30.500" stroke="#9ea2a8" stroke-width="1.800" stroke-linecap="round"/><path d="M12.800 4.200 8 15.800" stroke="#c9ccd0" stroke-width=".8"/></svg>
<div class="di" style="left:424.5px;top:6.7px;width:23.2px;height:23.2px;border-radius:5.2px;background:linear-gradient(#d8d8d8,#bcbcbc)"><svg width="23.2" height="23.2" viewBox="0 0 24 24"><rect x="5.8" y="3.4" width="12.400" height="17.2" rx="2" fill="#2a2a2c"/><rect x="7.4" y="5.2" width="9.200" height="3.6" rx=".6" fill="#4a4a4c"/><rect x="7.6" y="10.4" width="2.400" height="2.200" rx=".5" fill="#e8e8e8"/><rect x="7.6" y="13.6" width="2.400" height="2.200" rx=".5" fill="#e8e8e8"/><rect x="10.9" y="10.4" width="2.400" height="2.200" rx=".5" fill="#e8e8e8"/><rect x="10.9" y="13.6" width="2.400" height="2.200" rx=".5" fill="#e8e8e8"/><rect x="14.2" y="10.4" width="2.400" height="2.200" rx=".5" fill="#e6c85a"/><rect x="14.2" y="13.6" width="2.400" height="2.200" rx=".5" fill="#e6c85a"/><rect x="14.2" y="16.8" width="2.400" height="2.200" rx=".5" fill="#e6c85a"/><rect x="7.6" y="16.800" width="5.700" height="2.200" rx=".5" fill="#e8e8e8"/></svg></div>
<div class="di" style="left:454.8px;top:6.7px;width:23.2px;height:23.2px;border-radius:5.2px;background:linear-gradient(#9a9a9c,#7c7c7e)"><svg width="23.2" height="23.2" viewBox="0 0 24 24"><circle cx="12" cy="12" r="9.400" fill="#5a5a5c" stroke="#3a3a3c" stroke-width="1.200"/><circle cx="12" cy="12" r="6.600" fill="#77777a" stroke="#2c2c2e" stroke-width="1.100"/><path d="M12 12 12 5.600M12 12 6.400 15.400M12 12 17.600 15.400" stroke="#2c2c2e" stroke-width="1.300"/><circle cx="12" cy="12" r="1.700" fill="#2c2c2e"/></svg></div>
<div class="abs" style="left:470.0px;top:4.6px;width:7.6px;height:7.6px;border-radius:50%;background:#ee5548"></div>
<div class="t" style="left:470.0px;top:6.200px;width:7.6px;text-align:center;font-size:4.6px;color:#fff;font-weight:bold">1</div>
<div class="di" style="left:484.3px;top:6.7px;width:23.2px;height:23.2px;border-radius:5.2px;background:#55bf47"><svg width="23.2" height="23.2" viewBox="0 0 24 24"><path d="M12 4.800C7.400 4.800 3.800 7.700 3.800 11.300 3.800 14.500 6.600 17.100 10.400 17.700 11.300 17.900 10.800 19.600 10.600 20.200 13.200 19 20.200 15.200 20.200 11.300 20.200 7.700 16.600 4.800 12 4.800Z" fill="#f6faf4"/></svg><div class="t" style="left:0;width:100%;top:8.6px;text-align:center;font-size:4.4px;font-weight:bold;color:#56bd4a;letter-spacing:-.1px">LINE</div></div>
<div class="di" style="left:514.6px;top:6.7px;width:23.2px;height:23.2px;border-radius:5.2px;background:#f5f5f5"><svg width="23.2" height="23.2" viewBox="0 0 24 24"><rect x="8.400" y="3.200" width="7.200" height="10.600" rx="3.600" transform="rotate(0 12 12)" fill="none" stroke="#1f1f1f" stroke-width="1.300"/><rect x="8.400" y="3.200" width="7.200" height="10.600" rx="3.600" transform="rotate(60 12 12)" fill="none" stroke="#1f1f1f" stroke-width="1.300"/><rect x="8.400" y="3.200" width="7.200" height="10.600" rx="3.600" transform="rotate(120 12 12)" fill="none" stroke="#1f1f1f" stroke-width="1.300"/><rect x="8.400" y="3.200" width="7.200" height="10.600" rx="3.600" transform="rotate(180 12 12)" fill="none" stroke="#1f1f1f" stroke-width="1.300"/><rect x="8.400" y="3.200" width="7.200" height="10.600" rx="3.600" transform="rotate(240 12 12)" fill="none" stroke="#1f1f1f" stroke-width="1.300"/><rect x="8.400" y="3.200" width="7.200" height="10.600" rx="3.600" transform="rotate(300 12 12)" fill="none" stroke="#1f1f1f" stroke-width="1.300"/></svg></div>
<div class="di" style="left:541.6px;top:3.8px;width:28.8px;height:28.8px;border-radius:1.5px;background:#54c5d2"><div class="t" style="left:0;width:100%;top:7px;text-align:center;font-size:6.400px;font-weight:bold;color:#1d3448;letter-spacing:-.2px">amazon</div><svg class="abs" style="left:8.500px;top:13.200px" width="12" height="3" viewBox="0 0 12 3"><path d="M.5 .6Q6 3.400 11.500 .6" fill="none" stroke="#1d3448" stroke-width=".8"/></svg><div class="t" style="left:0;width:100%;top:15.400px;text-align:center;font-size:8.400px;color:#1d3448;letter-spacing:-.1px">music</div></div>
<div class="abs" style="left:578.3px;top:5px;width:1px;height:28px;background:#3f3f3f"></div>
<div class="abs" style="left:681.3px;top:5px;width:1px;height:28px;background:#3f3f3f"></div>
<div class="di" style="left:588.4px;top:6.7px;width:23.2px;height:23.2px;border-radius:5.2px;background:linear-gradient(#f4606e,#e8384c)"><svg width="23.2" height="23.2" viewBox="0 0 24 24"><path d="M9.400 6.800 17.400 5V15.400A2.300 2 0 1 1 16 13.500V8.200L10.800 9.400V17A2.300 2 0 1 1 9.400 15.100Z" fill="#fff"/></svg></div>
<div class="di" style="left:618.2px;top:6.7px;width:23.2px;height:23.2px;border-radius:5.2px;background:linear-gradient(135deg,#3a6ae0,#1f3fa8)"><svg width="23.2" height="23.2" viewBox="0 0 24 24"><path d="M6.500 9.500C8 6 17.500 4.500 17.800 8.200 18 11.500 11.500 12.800 9.800 12.200M12.600 7 8.800 19" fill="none" stroke="#fff" stroke-width="1.700" stroke-linecap="round"/></svg></div>
<div class="di" style="left:648.2px;top:5.6px;width:23.6px;height:22.0px;border-radius:4px;background:#1c1c1e;overflow:visible"><svg width="25.600" height="25.600" viewBox="0 0 26 26"><rect x="1.2" y="1.2" width="5" height="4.200" rx=".6" fill="#8a8a8a"/><rect x="1.2" y="6.2" width="5" height="4.200" rx=".6" fill="#6a6a6c"/><rect x="1.2" y="11.2" width="5" height="4.200" rx=".6" fill="#9a9a9a"/><rect x="1.2" y="16.2" width="5" height="4.200" rx=".6" fill="#5a5a5c"/><rect x="6.9" y="1.2" width="5" height="4.200" rx=".6" fill="#5a5a5c"/><rect x="6.9" y="6.2" width="5" height="4.200" rx=".6" fill="#8a8a8a"/><rect x="6.9" y="11.2" width="5" height="4.200" rx=".6" fill="#6a6a6c"/><rect x="6.9" y="16.2" width="5" height="4.200" rx=".6" fill="#9a9a9a"/><rect x="12.6" y="1.2" width="5" height="4.200" rx=".6" fill="#9a9a9a"/><rect x="12.6" y="6.2" width="5" height="4.200" rx=".6" fill="#5a5a5c"/><rect x="12.6" y="11.2" width="5" height="4.200" rx=".6" fill="#8a8a8a"/><rect x="12.6" y="16.2" width="5" height="4.200" rx=".6" fill="#6a6a6c"/><rect x="18.3" y="1.2" width="5" height="4.200" rx=".6" fill="#6a6a6c"/><rect x="18.3" y="6.2" width="5" height="4.200" rx=".6" fill="#9a9a9a"/><rect x="18.3" y="11.2" width="5" height="4.200" rx=".6" fill="#5a5a5c"/><rect x="18.3" y="16.2" width="5" height="4.200" rx=".6" fill="#8a8a8a"/><rect x="7.400" y="13" width="18" height="12" rx="1.800" fill="#a8a8a8"/><rect x="12" y="11.600" width="6" height="2.400" rx=".6" fill="#a8a8a8"/><circle cx="17.400" cy="19" r="4" fill="#2a2a2c"/><circle cx="17.400" cy="19" r="2" fill="#6a6a6e"/></svg></div>
<div class="dot" style="left:14.3px"></div>
<div class="dot" style="left:74.1px"></div>
<div class="dot" style="left:134.2px"></div>
<div class="dot" style="left:194.7px"></div>
<div class="dot" style="left:284.7px"></div>
<div class="dot" style="left:373.7px"></div>
<div class="dot" style="left:404.7px"></div>
<div class="dot" style="left:494.1px"></div>
<div class="dot" style="left:524.0px"></div>
<div class="dot" style="left:554.3px"></div>
<div class="dot" style="left:598.0px"></div>
<div class="dot" style="left:658.0px"></div>
</div>
</body></html>
